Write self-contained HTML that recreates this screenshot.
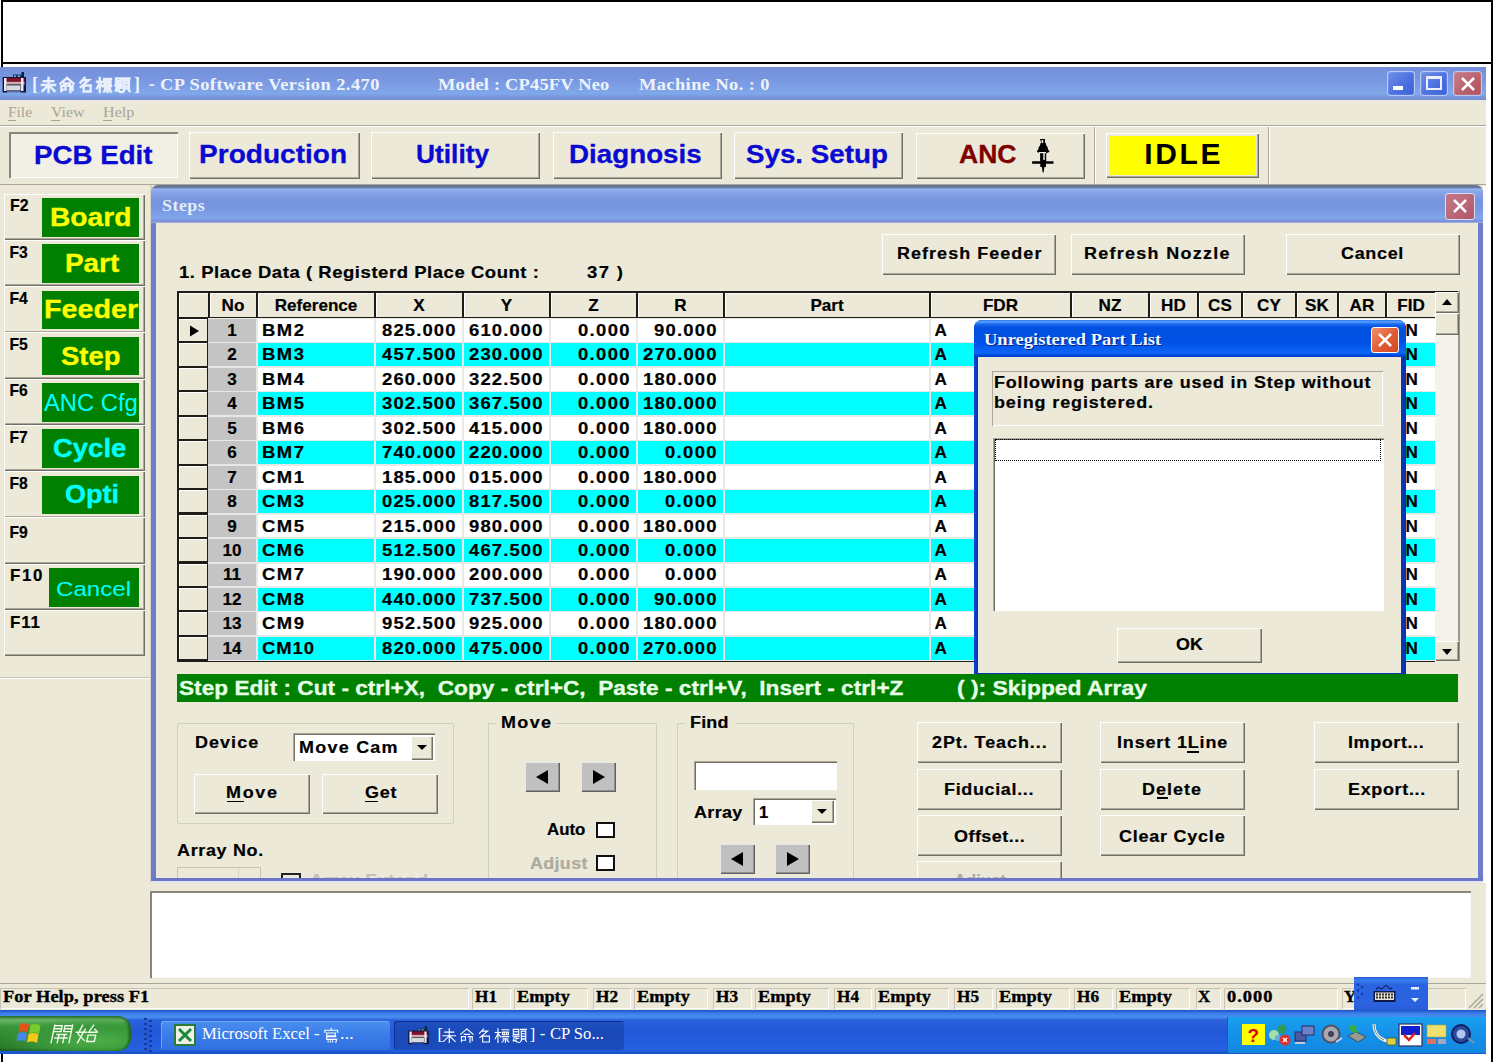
<!DOCTYPE html><html><head><meta charset="utf-8"><style>
*{margin:0;padding:0;box-sizing:border-box}
html,body{width:1493px;height:1062px;overflow:hidden;background:#fff}
body>div,.a>div{position:absolute}
body div{position:absolute;line-height:1;white-space:pre}
</style></head><body>
<div style="left:1px;top:0px;width:1492px;height:2px;background:#000"></div>
<div style="left:1px;top:0px;width:2px;height:1062px;background:#000"></div>
<div style="left:1491px;top:0px;width:2px;height:1062px;background:#000"></div>
<div style="left:1px;top:62px;width:1491px;height:2px;background:#000"></div>
<div style="left:0px;top:67px;width:1486px;height:986px;background:#ece9d8"></div>
<div style="left:0px;top:67px;width:1486px;height:33px;background:linear-gradient(#7490dc 0%,#7896e0 35%,#7d9fe6 60%,#80a8ea 80%,#7388d2 100%)"></div>
<svg style="position:absolute;left:0px;top:66px" width="32" height="32" viewBox="0 0 32 32"><rect x="13" y="8.5" width="10" height="3" fill="#183860"/><rect x="21.5" y="6" width="2.5" height="6" fill="#102040"/><rect x="14" y="9.5" width="2" height="1.5" fill="#8ab0d0"/><rect x="18" y="9.5" width="2" height="1.5" fill="#8ab0d0"/><rect x="2.6" y="11" width="23.4" height="15.5" fill="#10143a"/><rect x="4" y="12" width="20.5" height="3.8" fill="#801028"/><rect x="4" y="15.8" width="20.5" height="2.6" fill="#d8a8b0"/><rect x="4" y="18.4" width="20.5" height="1" fill="#506050"/><rect x="6.5" y="19.4" width="14" height="5" fill="#d8d8e0"/><rect x="4" y="12" width="2.5" height="13" fill="#e8e8f0"/><rect x="21" y="12" width="2.5" height="13" fill="#e8e8f0"/><rect x="7" y="25.3" width="13.5" height="1.5" fill="#7898d8"/></svg>
<div style="left:32.0px;top:74.7px;font-family:'Liberation Serif', serif;font-size:18px;font-weight:bold;color:#eef2fb;">[</div>
<svg style="position:absolute;left:40.5px;top:76.5px;overflow:visible" width="98" height="17"><g fill="none" stroke="#e8eefa" stroke-width="2.4" stroke-linecap="square"><path transform="translate(0.00,0) scale(0.938,0.938)" vector-effect="non-scaling-stroke" d="M3 4.5H13M1 8.5H15M8 1V16M8 8.5L1.5 15M8 8.5L14.5 15"/><path transform="translate(18.50,0) scale(0.938,0.938)" vector-effect="non-scaling-stroke" d="M8 1L1 7M8 1L15 7M5 7H11M2 9.5V15M2 9.5H6.5V13.5H2M9.5 9.5H14V14M11.5 9.5V16"/><path transform="translate(37.00,0) scale(0.938,0.938)" vector-effect="non-scaling-stroke" d="M7 1L2.5 6M5 3.5H11.5L3 10.5M6 9H13.5V15.5H6Z"/><path transform="translate(55.50,0) scale(0.938,0.938)" vector-effect="non-scaling-stroke" d="M0.5 5H6.5M3.5 1V16M3.5 6L0.5 12M3.5 6L6.5 10M8 2H15.5M8.5 4.5H15V7.5H8.5ZM10.5 4.5V7.5M13 4.5V7.5M8 9.5H15.5M9 12H14.5M11.8 12V16M10 13.5L8 15.5M13.5 13.5L15.5 15.5"/><path transform="translate(74.00,0) scale(0.938,0.938)" vector-effect="non-scaling-stroke" d="M1 1.5H7V7H1ZM1 4.2H7M0.5 9H7.5M4 9V14M4 11.5H7M2 10.5L0.8 14.5M1.5 13.5Q4 16 8 16M9 1.5H15.5M9.8 3.5H14.8V12H9.8ZM9.8 6.3H14.8M9.8 9.2H14.8M11 12L9 15M13.5 12L15.5 15"/></g></svg>
<div style="left:134.0px;top:74.7px;font-family:'Liberation Serif', serif;font-size:18px;font-weight:bold;color:#eef2fb;">]</div>
<div style="left:148.8px;top:74.7px;font-family:'Liberation Serif', serif;font-size:18px;font-weight:bold;color:#eef2fb;">-</div>
<div style="left:159.5px;top:75.5px;font-family:'Liberation Serif', serif;font-size:17px;font-weight:bold;color:#eef2fb;letter-spacing:0.45px;transform:scaleX(1.080);transform-origin:0 0;">CP Software Version 2.470</div>
<div style="left:437.7px;top:75.5px;font-family:'Liberation Serif', serif;font-size:17px;font-weight:bold;color:#eef2fb;letter-spacing:0.21px;transform:scaleX(1.080);transform-origin:0 0;">Model : CP45FV Neo</div>
<div style="left:639.3px;top:75.5px;font-family:'Liberation Serif', serif;font-size:17px;font-weight:bold;color:#eef2fb;letter-spacing:0.40px;transform:scaleX(1.080);transform-origin:0 0;">Machine No. : 0</div>
<div style="left:1387px;top:71px;width:28px;height:25px;background:linear-gradient(135deg,#6f8fe8,#4a6fe0 60%,#3e63d8);border:1px solid #b8c8f4;border-radius:3px;box-shadow:inset 0 0 1px #fff"></div>
<div style="left:1393px;top:86px;width:10px;height:4px;background:#fff"></div>
<div style="left:1420px;top:71px;width:28px;height:25px;background:linear-gradient(135deg,#6f8fe8,#4a6fe0 60%,#3e63d8);border:1px solid #b8c8f4;border-radius:3px;box-shadow:inset 0 0 1px #fff"></div>
<div style="left:1426px;top:76px;width:16px;height:14px;border:2px solid #eef;border-top-width:3px"></div>
<div style="left:1453px;top:71px;width:29px;height:25px;background:linear-gradient(135deg,#c87e8e,#b8606a 60%,#b05060);border:1px solid #b8c8f4;border-radius:3px;box-shadow:inset 0 0 1px #fff"></div>
<svg style="position:absolute;left:1458px;top:75px" width="20" height="18"><path d="M4 3L16 15M16 3L4 15" stroke="#fff" stroke-width="2.5"/></svg>
<div style="left:8.0px;top:105.3px;font-family:'Liberation Serif', serif;font-size:15px;font-weight:normal;color:#a8a596;letter-spacing:0.00px;transform:scaleX(1.028);transform-origin:0 0;">File</div>
<div style="left:51.0px;top:105.3px;font-family:'Liberation Serif', serif;font-size:15px;font-weight:normal;color:#a8a596;letter-spacing:0.00px;transform:scaleX(1.057);transform-origin:0 0;">View</div>
<div style="left:102.6px;top:105.3px;font-family:'Liberation Serif', serif;font-size:15px;font-weight:normal;color:#a8a596;letter-spacing:0.00px;transform:scaleX(1.076);transform-origin:0 0;">Help</div>
<div style="left:8px;top:120px;width:8px;height:1px;background:#a8a596"></div>
<div style="left:51px;top:120px;width:9px;height:1px;background:#a8a596"></div>
<div style="left:103px;top:120px;width:9px;height:1px;background:#a8a596"></div>
<div style="left:0px;top:125px;width:1486px;height:1px;background:#aca899"></div>
<div style="left:0px;top:126px;width:1486px;height:1px;background:#fff"></div>
<div style="left:9px;top:132px;width:169px;height:46px;background:#f2f0e6;box-shadow:inset 2px 2px #8a877a, inset -1px -1px #fff"></div>
<div style="left:34.2px;top:143.1px;font-family:'Liberation Sans', sans-serif;font-size:25.5px;font-weight:bold;color:#0a0ad0;transform:scaleX(1.086);transform-origin:0 0;-webkit-text-stroke:0.3px #0a0ad0;">PCB Edit</div>
<div style="left:189px;top:132px;width:171px;height:47px;background:#ece9d8;box-shadow:inset 1px 1px #fff, inset -1px -1px #716f64, inset -2px -2px #aca899;"></div>
<div style="left:199.0px;top:142.3px;font-family:'Liberation Sans', sans-serif;font-size:25.5px;font-weight:bold;color:#0a0ad0;transform:scaleX(1.100);transform-origin:0 0;-webkit-text-stroke:0.3px #0a0ad0;">Production</div>
<div style="left:371px;top:132px;width:169px;height:47px;background:#ece9d8;box-shadow:inset 1px 1px #fff, inset -1px -1px #716f64, inset -2px -2px #aca899;"></div>
<div style="left:416.3px;top:142.3px;font-family:'Liberation Sans', sans-serif;font-size:25.5px;font-weight:bold;color:#0a0ad0;transform:scaleX(1.032);transform-origin:0 0;-webkit-text-stroke:0.3px #0a0ad0;">Utility</div>
<div style="left:553px;top:132px;width:169px;height:47px;background:#ece9d8;box-shadow:inset 1px 1px #fff, inset -1px -1px #716f64, inset -2px -2px #aca899;"></div>
<div style="left:569.3px;top:142.3px;font-family:'Liberation Sans', sans-serif;font-size:25.5px;font-weight:bold;color:#0a0ad0;transform:scaleX(1.089);transform-origin:0 0;-webkit-text-stroke:0.3px #0a0ad0;">Diagnosis</div>
<div style="left:734px;top:132px;width:169px;height:47px;background:#ece9d8;box-shadow:inset 1px 1px #fff, inset -1px -1px #716f64, inset -2px -2px #aca899;"></div>
<div style="left:746.3px;top:142.3px;font-family:'Liberation Sans', sans-serif;font-size:25.5px;font-weight:bold;color:#0a0ad0;transform:scaleX(1.088);transform-origin:0 0;-webkit-text-stroke:0.3px #0a0ad0;">Sys. Setup</div>
<div style="left:916px;top:133px;width:169px;height:46px;background:#ece9d8;box-shadow:inset 1px 1px #fff, inset -1px -1px #716f64, inset -2px -2px #aca899;"></div>
<div style="left:959.0px;top:142.3px;font-family:'Liberation Sans', sans-serif;font-size:25.5px;font-weight:bold;color:#800000;transform:scaleX(1.041);transform-origin:0 0;-webkit-text-stroke:0.3px #800000;">ANC</div>
<svg style="position:absolute;left:1020px;top:132px" width="45" height="45" viewBox="0 0 45 45"><path d="M20 7h5v4h0.8l0.6 3 1 0.5 0.8 3.5 1 0.6v1.5l-3 1.2v8h7.3v2.4h-7.6v3.2h-1.6l-0.6 5.5h-1l-0.8-5.5h-1.6v-3.2h-8.2v-2.4h8v-8l-3-1.2v-1.5l1-0.6 0.8-3.5 1-0.5 0.6-3h0.8z" fill="#000"/><rect x="21.6" y="8" width="1.6" height="3" fill="#f0f0f0"/><rect x="23.2" y="20.5" width="1.6" height="7.5" fill="#d8d8d8"/><rect x="19" y="20" width="7" height="1.2" fill="#f0f0f0"/></svg>
<div style="left:1094px;top:127px;width:1px;height:57px;background:#aca899"></div>
<div style="left:1095px;top:127px;width:1px;height:57px;background:#fff"></div>
<div style="left:1105.5px;top:132.5px;width:153.5px;height:45.5px;background:#ece9d8;box-shadow:inset 1px 1px #fff, inset -1px -1px #716f64, inset -2px -2px #aca899;"></div>
<div style="left:1108.5px;top:135.5px;width:147.5px;height:39.5px;background:#ffff00"></div>
<div style="left:1144.3px;top:139.1px;font-family:'Liberation Sans', sans-serif;font-size:30px;font-weight:bold;color:#000;-webkit-text-stroke:0.3px #000;-webkit-text-stroke:0;letter-spacing:2.6px">IDLE</div>
<div style="left:1268px;top:127px;width:1px;height:57px;background:#aca899"></div>
<div style="left:1269px;top:127px;width:1px;height:57px;background:#fff"></div>
<div style="left:0px;top:184px;width:1486px;height:1px;background:#aca899"></div>
<div style="left:4px;top:193.6px;width:141px;height:46.6px;background:#ece9d8;box-shadow:inset 1px 1px #fff, inset -1px -1px #716f64, inset -2px -2px #aca899;"></div>
<div style="left:9.5px;top:198.3px;font-family:'Liberation Sans', sans-serif;font-size:15.67px;font-weight:bold;color:#000;letter-spacing:0.00px;transform:scaleX(1.012);transform-origin:0 0;-webkit-text-stroke:0.2px #000;">F2</div>
<div style="left:42px;top:198.1px;width:97px;height:38.5px;background:#008000"></div>
<div style="left:49.7px;top:204.8px;font-family:'Liberation Sans', sans-serif;font-size:25px;font-weight:bold;color:#ffff00;transform:scaleX(1.126);transform-origin:0 0;-webkit-text-stroke:0.3px #ffff00;">Board</div>
<div style="left:4px;top:239.8px;width:141px;height:46.6px;background:#ece9d8;box-shadow:inset 1px 1px #fff, inset -1px -1px #716f64, inset -2px -2px #aca899;"></div>
<div style="left:9.5px;top:244.5px;font-family:'Liberation Sans', sans-serif;font-size:15.67px;font-weight:bold;color:#000;-webkit-text-stroke:0.2px #000;">F3</div>
<div style="left:42px;top:244.3px;width:97px;height:38.5px;background:#008000"></div>
<div style="left:64.8px;top:251.1px;font-family:'Liberation Sans', sans-serif;font-size:25px;font-weight:bold;color:#ffff00;transform:scaleX(1.114);transform-origin:0 0;-webkit-text-stroke:0.3px #ffff00;">Part</div>
<div style="left:4px;top:286.1px;width:141px;height:46.6px;background:#ece9d8;box-shadow:inset 1px 1px #fff, inset -1px -1px #716f64, inset -2px -2px #aca899;"></div>
<div style="left:9.5px;top:290.8px;font-family:'Liberation Sans', sans-serif;font-size:15.67px;font-weight:bold;color:#000;-webkit-text-stroke:0.2px #000;">F4</div>
<div style="left:42px;top:290.6px;width:97px;height:38.5px;background:#008000"></div>
<div style="left:43.7px;top:297.4px;font-family:'Liberation Sans', sans-serif;font-size:25px;font-weight:bold;color:#ffff00;transform:scaleX(1.148);transform-origin:0 0;-webkit-text-stroke:0.3px #ffff00;">Feeder</div>
<div style="left:4px;top:332.4px;width:141px;height:46.6px;background:#ece9d8;box-shadow:inset 1px 1px #fff, inset -1px -1px #716f64, inset -2px -2px #aca899;"></div>
<div style="left:9.5px;top:337.0px;font-family:'Liberation Sans', sans-serif;font-size:15.67px;font-weight:bold;color:#000;-webkit-text-stroke:0.2px #000;">F5</div>
<div style="left:42px;top:336.9px;width:97px;height:38.5px;background:#008000"></div>
<div style="left:61.4px;top:343.6px;font-family:'Liberation Sans', sans-serif;font-size:25px;font-weight:bold;color:#ffff00;transform:scaleX(1.096);transform-origin:0 0;-webkit-text-stroke:0.3px #ffff00;">Step</div>
<div style="left:4px;top:378.6px;width:141px;height:46.6px;background:#ece9d8;box-shadow:inset 1px 1px #fff, inset -1px -1px #716f64, inset -2px -2px #aca899;"></div>
<div style="left:9.5px;top:383.3px;font-family:'Liberation Sans', sans-serif;font-size:15.67px;font-weight:bold;color:#000;-webkit-text-stroke:0.2px #000;">F6</div>
<div style="left:42px;top:383.1px;width:97px;height:38.5px;background:#008000"></div>
<div style="left:44.0px;top:391.6px;font-family:'Liberation Sans', sans-serif;font-size:23px;font-weight:normal;color:#00ffff;transform:scaleX(1.034);transform-origin:0 0;">ANC Cfg</div>
<div style="left:4px;top:424.9px;width:141px;height:46.6px;background:#ece9d8;box-shadow:inset 1px 1px #fff, inset -1px -1px #716f64, inset -2px -2px #aca899;"></div>
<div style="left:9.5px;top:429.5px;font-family:'Liberation Sans', sans-serif;font-size:15.67px;font-weight:bold;color:#000;-webkit-text-stroke:0.2px #000;">F7</div>
<div style="left:42px;top:429.4px;width:97px;height:38.5px;background:#008000"></div>
<div style="left:52.7px;top:436.1px;font-family:'Liberation Sans', sans-serif;font-size:25px;font-weight:bold;color:#00ffff;transform:scaleX(1.099);transform-origin:0 0;-webkit-text-stroke:0.3px #00ffff;">Cycle</div>
<div style="left:4px;top:471.1px;width:141px;height:46.6px;background:#ece9d8;box-shadow:inset 1px 1px #fff, inset -1px -1px #716f64, inset -2px -2px #aca899;"></div>
<div style="left:9.5px;top:475.8px;font-family:'Liberation Sans', sans-serif;font-size:15.67px;font-weight:bold;color:#000;-webkit-text-stroke:0.2px #000;">F8</div>
<div style="left:42px;top:475.6px;width:97px;height:38.5px;background:#008000"></div>
<div style="left:64.6px;top:482.4px;font-family:'Liberation Sans', sans-serif;font-size:25px;font-weight:bold;color:#00ffff;transform:scaleX(1.080);transform-origin:0 0;-webkit-text-stroke:0.3px #00ffff;">Opti</div>
<div style="left:4px;top:517.4px;width:141px;height:46.6px;background:#ece9d8;box-shadow:inset 1px 1px #fff, inset -1px -1px #716f64, inset -2px -2px #aca899;"></div>
<div style="left:9.5px;top:525.0px;font-family:'Liberation Sans', sans-serif;font-size:15.67px;font-weight:bold;color:#000;-webkit-text-stroke:0.2px #000;">F9</div>
<div style="left:4px;top:563.6px;width:141px;height:46.6px;background:#ece9d8;box-shadow:inset 1px 1px #fff, inset -1px -1px #716f64, inset -2px -2px #aca899;"></div>
<div style="left:9.5px;top:568.3px;font-family:'Liberation Sans', sans-serif;font-size:15.67px;font-weight:bold;color:#000;letter-spacing:1.55px;transform:scaleX(1.080);transform-origin:0 0;-webkit-text-stroke:0.2px #000;">F10</div>
<div style="left:49px;top:568.1px;width:90px;height:38.5px;background:#008000"></div>
<div style="left:55.9px;top:578.7px;font-family:'Liberation Sans', sans-serif;font-size:20.5px;font-weight:normal;color:#00ffff;transform:scaleX(1.177);transform-origin:0 0;">Cancel</div>
<div style="left:4px;top:609.9px;width:141px;height:46.6px;background:#ece9d8;box-shadow:inset 1px 1px #fff, inset -1px -1px #716f64, inset -2px -2px #aca899;"></div>
<div style="left:9.5px;top:614.5px;font-family:'Liberation Sans', sans-serif;font-size:15.67px;font-weight:bold;color:#000;letter-spacing:0.83px;transform:scaleX(1.080);transform-origin:0 0;-webkit-text-stroke:0.2px #000;">F11</div>
<div style="left:150px;top:185px;width:2px;height:868px;background:#d8d4c4"></div>
<div style="left:0px;top:677px;width:150px;height:1px;background:#c8c4b4"></div>
<div style="left:0px;top:678px;width:150px;height:1px;background:#fff"></div>
<div style="left:151px;top:186px;width:1332px;height:697px;background:#6e7cca;border-radius:7px 7px 0 0"></div>
<div style="left:1483px;top:186px;width:3px;height:697px;background:#fafafa"></div>
<div style="left:151px;top:184.5px;width:1332px;height:38.5px;background:linear-gradient(#647494 0px,#6a7a9c 2.5px,#94b2f2 4px,#86a2e8 8px,#7794de 16px,#7898e2 24px,#80a6ea 33px,#7c90dc 36px,#8090d8 37px,#dce4e4 38.5px);border-radius:7px 7px 0 0"></div>
<div style="left:156px;top:223px;width:1322px;height:655px;background:#ece9d8"></div>
<div style="left:161.9px;top:198.2px;font-family:'Liberation Serif', serif;font-size:16.5px;font-weight:bold;color:#e4ecfb;letter-spacing:0.49px;transform:scaleX(1.080);transform-origin:0 0;">Steps</div>
<div style="left:1445px;top:193px;width:30px;height:27px;background:linear-gradient(135deg,#c47888,#b05868);border:1px solid #d8def4;border-radius:3px"></div>
<svg style="position:absolute;left:1450px;top:196px" width="20" height="20"><path d="M4 4L16 16M16 4L4 16" stroke="#fff" stroke-width="2.5"/></svg>
<div style="left:178.5px;top:264.3px;font-family:'Liberation Sans', sans-serif;font-size:17.1px;font-weight:bold;color:#000;letter-spacing:0.52px;transform:scaleX(1.080);transform-origin:0 0;-webkit-text-stroke:0.2px #000;">1. Place Data ( Registerd Place Count :</div>
<div style="left:587.0px;top:264.3px;font-family:'Liberation Sans', sans-serif;font-size:17.1px;font-weight:bold;color:#000;letter-spacing:1.29px;transform:scaleX(1.080);transform-origin:0 0;-webkit-text-stroke:0.2px #000;">37 )</div>
<div style="left:882px;top:234px;width:174px;height:41px;background:#ece9d8;box-shadow:inset 1px 1px #fff, inset -1px -1px #716f64, inset -2px -2px #aca899;"></div>
<div style="left:897.3px;top:245.5px;font-family:'Liberation Sans', sans-serif;font-size:16.62px;font-weight:bold;color:#000;letter-spacing:0.98px;transform:scaleX(1.080);transform-origin:0 0;-webkit-text-stroke:0.2px #000;">Refresh Feeder</div>
<div style="left:1071px;top:234px;width:174px;height:41px;background:#ece9d8;box-shadow:inset 1px 1px #fff, inset -1px -1px #716f64, inset -2px -2px #aca899;"></div>
<div style="left:1084.1px;top:245.5px;font-family:'Liberation Sans', sans-serif;font-size:16.62px;font-weight:bold;color:#000;letter-spacing:1.20px;transform:scaleX(1.080);transform-origin:0 0;-webkit-text-stroke:0.2px #000;">Refresh Nozzle</div>
<div style="left:1286px;top:234px;width:174px;height:41px;background:#ece9d8;box-shadow:inset 1px 1px #fff, inset -1px -1px #716f64, inset -2px -2px #aca899;"></div>
<div style="left:1341.4px;top:245.5px;font-family:'Liberation Sans', sans-serif;font-size:16.62px;font-weight:bold;color:#000;letter-spacing:0.64px;transform:scaleX(1.080);transform-origin:0 0;-webkit-text-stroke:0.2px #000;">Cancel</div>
<div style="left:177px;top:291px;width:1258px;height:370.8px;background:#201c18"></div>
<div style="left:178.5px;top:292.5px;width:29px;height:24.5px;background:#ece9d8;box-shadow:inset 1px 1px #fff"></div>
<div style="left:209.5px;top:292.5px;width:46px;height:24.5px;background:#ece9d8;box-shadow:inset 1px 1px #fff"></div>
<div style="left:221.6px;top:296.8px;font-family:'Liberation Sans', sans-serif;font-size:17.1px;font-weight:bold;color:#000;-webkit-text-stroke:0.2px #000;">No</div>
<div style="left:257.5px;top:292.5px;width:116px;height:24.5px;background:#ece9d8;box-shadow:inset 1px 1px #fff"></div>
<div style="left:274.7px;top:296.8px;font-family:'Liberation Sans', sans-serif;font-size:17.1px;font-weight:bold;color:#000;-webkit-text-stroke:0.2px #000;">Reference</div>
<div style="left:375.5px;top:292.5px;width:86px;height:24.5px;background:#ece9d8;box-shadow:inset 1px 1px #fff"></div>
<div style="left:413.3px;top:296.8px;font-family:'Liberation Sans', sans-serif;font-size:17.1px;font-weight:bold;color:#000;-webkit-text-stroke:0.2px #000;">X</div>
<div style="left:463.5px;top:292.5px;width:85px;height:24.5px;background:#ece9d8;box-shadow:inset 1px 1px #fff"></div>
<div style="left:500.8px;top:296.8px;font-family:'Liberation Sans', sans-serif;font-size:17.1px;font-weight:bold;color:#000;-webkit-text-stroke:0.2px #000;">Y</div>
<div style="left:550.5px;top:292.5px;width:85px;height:24.5px;background:#ece9d8;box-shadow:inset 1px 1px #fff"></div>
<div style="left:588.3px;top:296.8px;font-family:'Liberation Sans', sans-serif;font-size:17.1px;font-weight:bold;color:#000;-webkit-text-stroke:0.2px #000;">Z</div>
<div style="left:637.5px;top:292.5px;width:85px;height:24.5px;background:#ece9d8;box-shadow:inset 1px 1px #fff"></div>
<div style="left:674.3px;top:296.8px;font-family:'Liberation Sans', sans-serif;font-size:17.1px;font-weight:bold;color:#000;-webkit-text-stroke:0.2px #000;">R</div>
<div style="left:724.5px;top:292.5px;width:204px;height:24.5px;background:#ece9d8;box-shadow:inset 1px 1px #fff"></div>
<div style="left:810.4px;top:296.8px;font-family:'Liberation Sans', sans-serif;font-size:17.1px;font-weight:bold;color:#000;-webkit-text-stroke:0.2px #000;">Part</div>
<div style="left:930.5px;top:292.5px;width:139px;height:24.5px;background:#ece9d8;box-shadow:inset 1px 1px #fff"></div>
<div style="left:982.9px;top:296.8px;font-family:'Liberation Sans', sans-serif;font-size:17.1px;font-weight:bold;color:#000;-webkit-text-stroke:0.2px #000;">FDR</div>
<div style="left:1071.5px;top:292.5px;width:76px;height:24.5px;background:#ece9d8;box-shadow:inset 1px 1px #fff"></div>
<div style="left:1098.6px;top:296.8px;font-family:'Liberation Sans', sans-serif;font-size:17.1px;font-weight:bold;color:#000;-webkit-text-stroke:0.2px #000;">NZ</div>
<div style="left:1149.5px;top:292.5px;width:47px;height:24.5px;background:#ece9d8;box-shadow:inset 1px 1px #fff"></div>
<div style="left:1161.1px;top:296.8px;font-family:'Liberation Sans', sans-serif;font-size:17.1px;font-weight:bold;color:#000;-webkit-text-stroke:0.2px #000;">HD</div>
<div style="left:1198.5px;top:292.5px;width:42px;height:24.5px;background:#ece9d8;box-shadow:inset 1px 1px #fff"></div>
<div style="left:1208.1px;top:296.8px;font-family:'Liberation Sans', sans-serif;font-size:17.1px;font-weight:bold;color:#000;-webkit-text-stroke:0.2px #000;">CS</div>
<div style="left:1242.5px;top:292.5px;width:52px;height:24.5px;background:#ece9d8;box-shadow:inset 1px 1px #fff"></div>
<div style="left:1257.1px;top:296.8px;font-family:'Liberation Sans', sans-serif;font-size:17.1px;font-weight:bold;color:#000;-webkit-text-stroke:0.2px #000;">CY</div>
<div style="left:1296.5px;top:292.5px;width:40px;height:24.5px;background:#ece9d8;box-shadow:inset 1px 1px #fff"></div>
<div style="left:1305.1px;top:296.8px;font-family:'Liberation Sans', sans-serif;font-size:17.1px;font-weight:bold;color:#000;-webkit-text-stroke:0.2px #000;">SK</div>
<div style="left:1338.5px;top:292.5px;width:46px;height:24.5px;background:#ece9d8;box-shadow:inset 1px 1px #fff"></div>
<div style="left:1349.6px;top:296.8px;font-family:'Liberation Sans', sans-serif;font-size:17.1px;font-weight:bold;color:#000;-webkit-text-stroke:0.2px #000;">AR</div>
<div style="left:1386.5px;top:292.5px;width:48px;height:24.5px;background:#ece9d8;box-shadow:inset 1px 1px #fff"></div>
<div style="left:1397.2px;top:296.8px;font-family:'Liberation Sans', sans-serif;font-size:17.1px;font-weight:bold;color:#000;-webkit-text-stroke:0.2px #000;">FID</div>
<div style="left:178.5px;top:319.0px;width:28.5px;height:22.4px;background:#ece9d8;box-shadow:inset 1px 1px #fff"></div>
<div style="left:208px;top:318.0px;width:1227px;height:24.9px;background:#e8e8e4"></div>
<div style="left:208px;top:319.0px;width:48px;height:22.9px;background:#c4c4c4"></div>
<div style="left:257.5px;top:319.0px;width:116px;height:22.9px;background:#ffffff"></div>
<div style="left:375.5px;top:319.0px;width:86px;height:22.9px;background:#ffffff"></div>
<div style="left:463.5px;top:319.0px;width:85px;height:22.9px;background:#ffffff"></div>
<div style="left:550.5px;top:319.0px;width:85px;height:22.9px;background:#ffffff"></div>
<div style="left:637.5px;top:319.0px;width:85px;height:22.9px;background:#ffffff"></div>
<div style="left:724.5px;top:319.0px;width:204px;height:22.9px;background:#ffffff"></div>
<div style="left:930.5px;top:319.0px;width:139px;height:22.9px;background:#ffffff"></div>
<div style="left:1071.5px;top:319.0px;width:76px;height:22.9px;background:#ffffff"></div>
<div style="left:1149.5px;top:319.0px;width:47px;height:22.9px;background:#ffffff"></div>
<div style="left:1198.5px;top:319.0px;width:42px;height:22.9px;background:#ffffff"></div>
<div style="left:1242.5px;top:319.0px;width:52px;height:22.9px;background:#ffffff"></div>
<div style="left:1296.5px;top:319.0px;width:40px;height:22.9px;background:#ffffff"></div>
<div style="left:1338.5px;top:319.0px;width:46px;height:22.9px;background:#ffffff"></div>
<div style="left:1386.5px;top:319.0px;width:48px;height:22.9px;background:#ffffff"></div>
<div style="left:227.2px;top:321.9px;font-family:'Liberation Sans', sans-serif;font-size:17.1px;font-weight:bold;color:#000;-webkit-text-stroke:0.2px #000;">1</div>
<div style="left:261.5px;top:321.9px;font-family:'Liberation Sans', sans-serif;font-size:17.1px;font-weight:bold;color:#000;letter-spacing:1.35px;transform:scaleX(1.080);transform-origin:0 0;-webkit-text-stroke:0.2px #000;">BM2</div>
<div style="left:382.3px;top:321.9px;font-family:'Liberation Sans', sans-serif;font-size:17.1px;font-weight:bold;color:#000;letter-spacing:1.04px;transform:scaleX(1.080);transform-origin:0 0;-webkit-text-stroke:0.2px #000;">825.000</div>
<div style="left:468.5px;top:321.9px;font-family:'Liberation Sans', sans-serif;font-size:17.1px;font-weight:bold;color:#000;letter-spacing:1.04px;transform:scaleX(1.080);transform-origin:0 0;-webkit-text-stroke:0.2px #000;">610.000</div>
<div style="left:578.2px;top:321.9px;font-family:'Liberation Sans', sans-serif;font-size:17.1px;font-weight:bold;color:#000;letter-spacing:1.23px;transform:scaleX(1.080);transform-origin:0 0;-webkit-text-stroke:0.2px #000;">0.000</div>
<div style="left:654.2px;top:321.9px;font-family:'Liberation Sans', sans-serif;font-size:17.1px;font-weight:bold;color:#000;letter-spacing:1.11px;transform:scaleX(1.080);transform-origin:0 0;-webkit-text-stroke:0.2px #000;">90.000</div>
<div style="left:934.5px;top:321.9px;font-family:'Liberation Sans', sans-serif;font-size:17.1px;font-weight:bold;color:#000;-webkit-text-stroke:0.2px #000;">A</div>
<div style="left:1405.5px;top:321.9px;font-family:'Liberation Sans', sans-serif;font-size:17.1px;font-weight:bold;color:#000;-webkit-text-stroke:0.2px #000;">N</div>
<div style="left:178.5px;top:343.4px;width:28.5px;height:22.4px;background:#ece9d8;box-shadow:inset 1px 1px #fff"></div>
<div style="left:208px;top:342.4px;width:1227px;height:24.9px;background:#e8e8e4"></div>
<div style="left:208px;top:343.4px;width:48px;height:22.9px;background:#c4c4c4"></div>
<div style="left:257.5px;top:343.4px;width:116px;height:22.9px;background:#00ffff"></div>
<div style="left:375.5px;top:343.4px;width:86px;height:22.9px;background:#00ffff"></div>
<div style="left:463.5px;top:343.4px;width:85px;height:22.9px;background:#00ffff"></div>
<div style="left:550.5px;top:343.4px;width:85px;height:22.9px;background:#00ffff"></div>
<div style="left:637.5px;top:343.4px;width:85px;height:22.9px;background:#00ffff"></div>
<div style="left:724.5px;top:343.4px;width:204px;height:22.9px;background:#00ffff"></div>
<div style="left:930.5px;top:343.4px;width:139px;height:22.9px;background:#00ffff"></div>
<div style="left:1071.5px;top:343.4px;width:76px;height:22.9px;background:#00ffff"></div>
<div style="left:1149.5px;top:343.4px;width:47px;height:22.9px;background:#00ffff"></div>
<div style="left:1198.5px;top:343.4px;width:42px;height:22.9px;background:#00ffff"></div>
<div style="left:1242.5px;top:343.4px;width:52px;height:22.9px;background:#00ffff"></div>
<div style="left:1296.5px;top:343.4px;width:40px;height:22.9px;background:#00ffff"></div>
<div style="left:1338.5px;top:343.4px;width:46px;height:22.9px;background:#00ffff"></div>
<div style="left:1386.5px;top:343.4px;width:48px;height:22.9px;background:#00ffff"></div>
<div style="left:227.2px;top:346.3px;font-family:'Liberation Sans', sans-serif;font-size:17.1px;font-weight:bold;color:#000;-webkit-text-stroke:0.2px #000;">2</div>
<div style="left:261.5px;top:346.3px;font-family:'Liberation Sans', sans-serif;font-size:17.1px;font-weight:bold;color:#000;letter-spacing:1.35px;transform:scaleX(1.080);transform-origin:0 0;-webkit-text-stroke:0.2px #000;">BM3</div>
<div style="left:382.3px;top:346.3px;font-family:'Liberation Sans', sans-serif;font-size:17.1px;font-weight:bold;color:#000;letter-spacing:1.04px;transform:scaleX(1.080);transform-origin:0 0;-webkit-text-stroke:0.2px #000;">457.500</div>
<div style="left:468.5px;top:346.3px;font-family:'Liberation Sans', sans-serif;font-size:17.1px;font-weight:bold;color:#000;letter-spacing:1.04px;transform:scaleX(1.080);transform-origin:0 0;-webkit-text-stroke:0.2px #000;">230.000</div>
<div style="left:578.2px;top:346.3px;font-family:'Liberation Sans', sans-serif;font-size:17.1px;font-weight:bold;color:#000;letter-spacing:1.23px;transform:scaleX(1.080);transform-origin:0 0;-webkit-text-stroke:0.2px #000;">0.000</div>
<div style="left:643.2px;top:346.3px;font-family:'Liberation Sans', sans-serif;font-size:17.1px;font-weight:bold;color:#000;letter-spacing:1.04px;transform:scaleX(1.080);transform-origin:0 0;-webkit-text-stroke:0.2px #000;">270.000</div>
<div style="left:934.5px;top:346.3px;font-family:'Liberation Sans', sans-serif;font-size:17.1px;font-weight:bold;color:#000;-webkit-text-stroke:0.2px #000;">A</div>
<div style="left:1405.5px;top:346.3px;font-family:'Liberation Sans', sans-serif;font-size:17.1px;font-weight:bold;color:#000;-webkit-text-stroke:0.2px #000;">N</div>
<div style="left:178.5px;top:367.9px;width:28.5px;height:22.4px;background:#ece9d8;box-shadow:inset 1px 1px #fff"></div>
<div style="left:208px;top:366.9px;width:1227px;height:24.9px;background:#e8e8e4"></div>
<div style="left:208px;top:367.9px;width:48px;height:22.9px;background:#c4c4c4"></div>
<div style="left:257.5px;top:367.9px;width:116px;height:22.9px;background:#ffffff"></div>
<div style="left:375.5px;top:367.9px;width:86px;height:22.9px;background:#ffffff"></div>
<div style="left:463.5px;top:367.9px;width:85px;height:22.9px;background:#ffffff"></div>
<div style="left:550.5px;top:367.9px;width:85px;height:22.9px;background:#ffffff"></div>
<div style="left:637.5px;top:367.9px;width:85px;height:22.9px;background:#ffffff"></div>
<div style="left:724.5px;top:367.9px;width:204px;height:22.9px;background:#ffffff"></div>
<div style="left:930.5px;top:367.9px;width:139px;height:22.9px;background:#ffffff"></div>
<div style="left:1071.5px;top:367.9px;width:76px;height:22.9px;background:#ffffff"></div>
<div style="left:1149.5px;top:367.9px;width:47px;height:22.9px;background:#ffffff"></div>
<div style="left:1198.5px;top:367.9px;width:42px;height:22.9px;background:#ffffff"></div>
<div style="left:1242.5px;top:367.9px;width:52px;height:22.9px;background:#ffffff"></div>
<div style="left:1296.5px;top:367.9px;width:40px;height:22.9px;background:#ffffff"></div>
<div style="left:1338.5px;top:367.9px;width:46px;height:22.9px;background:#ffffff"></div>
<div style="left:1386.5px;top:367.9px;width:48px;height:22.9px;background:#ffffff"></div>
<div style="left:227.2px;top:370.8px;font-family:'Liberation Sans', sans-serif;font-size:17.1px;font-weight:bold;color:#000;-webkit-text-stroke:0.2px #000;">3</div>
<div style="left:261.5px;top:370.8px;font-family:'Liberation Sans', sans-serif;font-size:17.1px;font-weight:bold;color:#000;letter-spacing:1.35px;transform:scaleX(1.080);transform-origin:0 0;-webkit-text-stroke:0.2px #000;">BM4</div>
<div style="left:382.3px;top:370.8px;font-family:'Liberation Sans', sans-serif;font-size:17.1px;font-weight:bold;color:#000;letter-spacing:1.04px;transform:scaleX(1.080);transform-origin:0 0;-webkit-text-stroke:0.2px #000;">260.000</div>
<div style="left:468.5px;top:370.8px;font-family:'Liberation Sans', sans-serif;font-size:17.1px;font-weight:bold;color:#000;letter-spacing:1.04px;transform:scaleX(1.080);transform-origin:0 0;-webkit-text-stroke:0.2px #000;">322.500</div>
<div style="left:578.2px;top:370.8px;font-family:'Liberation Sans', sans-serif;font-size:17.1px;font-weight:bold;color:#000;letter-spacing:1.23px;transform:scaleX(1.080);transform-origin:0 0;-webkit-text-stroke:0.2px #000;">0.000</div>
<div style="left:643.2px;top:370.8px;font-family:'Liberation Sans', sans-serif;font-size:17.1px;font-weight:bold;color:#000;letter-spacing:1.04px;transform:scaleX(1.080);transform-origin:0 0;-webkit-text-stroke:0.2px #000;">180.000</div>
<div style="left:934.5px;top:370.8px;font-family:'Liberation Sans', sans-serif;font-size:17.1px;font-weight:bold;color:#000;-webkit-text-stroke:0.2px #000;">A</div>
<div style="left:1405.5px;top:370.8px;font-family:'Liberation Sans', sans-serif;font-size:17.1px;font-weight:bold;color:#000;-webkit-text-stroke:0.2px #000;">N</div>
<div style="left:178.5px;top:392.4px;width:28.5px;height:22.4px;background:#ece9d8;box-shadow:inset 1px 1px #fff"></div>
<div style="left:208px;top:391.4px;width:1227px;height:24.9px;background:#e8e8e4"></div>
<div style="left:208px;top:392.4px;width:48px;height:22.9px;background:#c4c4c4"></div>
<div style="left:257.5px;top:392.4px;width:116px;height:22.9px;background:#00ffff"></div>
<div style="left:375.5px;top:392.4px;width:86px;height:22.9px;background:#00ffff"></div>
<div style="left:463.5px;top:392.4px;width:85px;height:22.9px;background:#00ffff"></div>
<div style="left:550.5px;top:392.4px;width:85px;height:22.9px;background:#00ffff"></div>
<div style="left:637.5px;top:392.4px;width:85px;height:22.9px;background:#00ffff"></div>
<div style="left:724.5px;top:392.4px;width:204px;height:22.9px;background:#00ffff"></div>
<div style="left:930.5px;top:392.4px;width:139px;height:22.9px;background:#00ffff"></div>
<div style="left:1071.5px;top:392.4px;width:76px;height:22.9px;background:#00ffff"></div>
<div style="left:1149.5px;top:392.4px;width:47px;height:22.9px;background:#00ffff"></div>
<div style="left:1198.5px;top:392.4px;width:42px;height:22.9px;background:#00ffff"></div>
<div style="left:1242.5px;top:392.4px;width:52px;height:22.9px;background:#00ffff"></div>
<div style="left:1296.5px;top:392.4px;width:40px;height:22.9px;background:#00ffff"></div>
<div style="left:1338.5px;top:392.4px;width:46px;height:22.9px;background:#00ffff"></div>
<div style="left:1386.5px;top:392.4px;width:48px;height:22.9px;background:#00ffff"></div>
<div style="left:227.2px;top:395.2px;font-family:'Liberation Sans', sans-serif;font-size:17.1px;font-weight:bold;color:#000;-webkit-text-stroke:0.2px #000;">4</div>
<div style="left:261.5px;top:395.2px;font-family:'Liberation Sans', sans-serif;font-size:17.1px;font-weight:bold;color:#000;letter-spacing:1.35px;transform:scaleX(1.080);transform-origin:0 0;-webkit-text-stroke:0.2px #000;">BM5</div>
<div style="left:382.3px;top:395.2px;font-family:'Liberation Sans', sans-serif;font-size:17.1px;font-weight:bold;color:#000;letter-spacing:1.04px;transform:scaleX(1.080);transform-origin:0 0;-webkit-text-stroke:0.2px #000;">302.500</div>
<div style="left:468.5px;top:395.2px;font-family:'Liberation Sans', sans-serif;font-size:17.1px;font-weight:bold;color:#000;letter-spacing:1.04px;transform:scaleX(1.080);transform-origin:0 0;-webkit-text-stroke:0.2px #000;">367.500</div>
<div style="left:578.2px;top:395.2px;font-family:'Liberation Sans', sans-serif;font-size:17.1px;font-weight:bold;color:#000;letter-spacing:1.23px;transform:scaleX(1.080);transform-origin:0 0;-webkit-text-stroke:0.2px #000;">0.000</div>
<div style="left:643.2px;top:395.2px;font-family:'Liberation Sans', sans-serif;font-size:17.1px;font-weight:bold;color:#000;letter-spacing:1.04px;transform:scaleX(1.080);transform-origin:0 0;-webkit-text-stroke:0.2px #000;">180.000</div>
<div style="left:934.5px;top:395.2px;font-family:'Liberation Sans', sans-serif;font-size:17.1px;font-weight:bold;color:#000;-webkit-text-stroke:0.2px #000;">A</div>
<div style="left:1405.5px;top:395.2px;font-family:'Liberation Sans', sans-serif;font-size:17.1px;font-weight:bold;color:#000;-webkit-text-stroke:0.2px #000;">N</div>
<div style="left:178.5px;top:416.8px;width:28.5px;height:22.4px;background:#ece9d8;box-shadow:inset 1px 1px #fff"></div>
<div style="left:208px;top:415.8px;width:1227px;height:24.9px;background:#e8e8e4"></div>
<div style="left:208px;top:416.8px;width:48px;height:22.9px;background:#c4c4c4"></div>
<div style="left:257.5px;top:416.8px;width:116px;height:22.9px;background:#ffffff"></div>
<div style="left:375.5px;top:416.8px;width:86px;height:22.9px;background:#ffffff"></div>
<div style="left:463.5px;top:416.8px;width:85px;height:22.9px;background:#ffffff"></div>
<div style="left:550.5px;top:416.8px;width:85px;height:22.9px;background:#ffffff"></div>
<div style="left:637.5px;top:416.8px;width:85px;height:22.9px;background:#ffffff"></div>
<div style="left:724.5px;top:416.8px;width:204px;height:22.9px;background:#ffffff"></div>
<div style="left:930.5px;top:416.8px;width:139px;height:22.9px;background:#ffffff"></div>
<div style="left:1071.5px;top:416.8px;width:76px;height:22.9px;background:#ffffff"></div>
<div style="left:1149.5px;top:416.8px;width:47px;height:22.9px;background:#ffffff"></div>
<div style="left:1198.5px;top:416.8px;width:42px;height:22.9px;background:#ffffff"></div>
<div style="left:1242.5px;top:416.8px;width:52px;height:22.9px;background:#ffffff"></div>
<div style="left:1296.5px;top:416.8px;width:40px;height:22.9px;background:#ffffff"></div>
<div style="left:1338.5px;top:416.8px;width:46px;height:22.9px;background:#ffffff"></div>
<div style="left:1386.5px;top:416.8px;width:48px;height:22.9px;background:#ffffff"></div>
<div style="left:227.2px;top:419.7px;font-family:'Liberation Sans', sans-serif;font-size:17.1px;font-weight:bold;color:#000;-webkit-text-stroke:0.2px #000;">5</div>
<div style="left:261.5px;top:419.7px;font-family:'Liberation Sans', sans-serif;font-size:17.1px;font-weight:bold;color:#000;letter-spacing:1.35px;transform:scaleX(1.080);transform-origin:0 0;-webkit-text-stroke:0.2px #000;">BM6</div>
<div style="left:382.3px;top:419.7px;font-family:'Liberation Sans', sans-serif;font-size:17.1px;font-weight:bold;color:#000;letter-spacing:1.04px;transform:scaleX(1.080);transform-origin:0 0;-webkit-text-stroke:0.2px #000;">302.500</div>
<div style="left:468.5px;top:419.7px;font-family:'Liberation Sans', sans-serif;font-size:17.1px;font-weight:bold;color:#000;letter-spacing:1.04px;transform:scaleX(1.080);transform-origin:0 0;-webkit-text-stroke:0.2px #000;">415.000</div>
<div style="left:578.2px;top:419.7px;font-family:'Liberation Sans', sans-serif;font-size:17.1px;font-weight:bold;color:#000;letter-spacing:1.23px;transform:scaleX(1.080);transform-origin:0 0;-webkit-text-stroke:0.2px #000;">0.000</div>
<div style="left:643.2px;top:419.7px;font-family:'Liberation Sans', sans-serif;font-size:17.1px;font-weight:bold;color:#000;letter-spacing:1.04px;transform:scaleX(1.080);transform-origin:0 0;-webkit-text-stroke:0.2px #000;">180.000</div>
<div style="left:934.5px;top:419.7px;font-family:'Liberation Sans', sans-serif;font-size:17.1px;font-weight:bold;color:#000;-webkit-text-stroke:0.2px #000;">A</div>
<div style="left:1405.5px;top:419.7px;font-family:'Liberation Sans', sans-serif;font-size:17.1px;font-weight:bold;color:#000;-webkit-text-stroke:0.2px #000;">N</div>
<div style="left:178.5px;top:441.2px;width:28.5px;height:22.4px;background:#ece9d8;box-shadow:inset 1px 1px #fff"></div>
<div style="left:208px;top:440.2px;width:1227px;height:24.9px;background:#e8e8e4"></div>
<div style="left:208px;top:441.2px;width:48px;height:22.9px;background:#c4c4c4"></div>
<div style="left:257.5px;top:441.2px;width:116px;height:22.9px;background:#00ffff"></div>
<div style="left:375.5px;top:441.2px;width:86px;height:22.9px;background:#00ffff"></div>
<div style="left:463.5px;top:441.2px;width:85px;height:22.9px;background:#00ffff"></div>
<div style="left:550.5px;top:441.2px;width:85px;height:22.9px;background:#00ffff"></div>
<div style="left:637.5px;top:441.2px;width:85px;height:22.9px;background:#00ffff"></div>
<div style="left:724.5px;top:441.2px;width:204px;height:22.9px;background:#00ffff"></div>
<div style="left:930.5px;top:441.2px;width:139px;height:22.9px;background:#00ffff"></div>
<div style="left:1071.5px;top:441.2px;width:76px;height:22.9px;background:#00ffff"></div>
<div style="left:1149.5px;top:441.2px;width:47px;height:22.9px;background:#00ffff"></div>
<div style="left:1198.5px;top:441.2px;width:42px;height:22.9px;background:#00ffff"></div>
<div style="left:1242.5px;top:441.2px;width:52px;height:22.9px;background:#00ffff"></div>
<div style="left:1296.5px;top:441.2px;width:40px;height:22.9px;background:#00ffff"></div>
<div style="left:1338.5px;top:441.2px;width:46px;height:22.9px;background:#00ffff"></div>
<div style="left:1386.5px;top:441.2px;width:48px;height:22.9px;background:#00ffff"></div>
<div style="left:227.2px;top:444.1px;font-family:'Liberation Sans', sans-serif;font-size:17.1px;font-weight:bold;color:#000;-webkit-text-stroke:0.2px #000;">6</div>
<div style="left:261.5px;top:444.1px;font-family:'Liberation Sans', sans-serif;font-size:17.1px;font-weight:bold;color:#000;letter-spacing:1.35px;transform:scaleX(1.080);transform-origin:0 0;-webkit-text-stroke:0.2px #000;">BM7</div>
<div style="left:382.3px;top:444.1px;font-family:'Liberation Sans', sans-serif;font-size:17.1px;font-weight:bold;color:#000;letter-spacing:1.04px;transform:scaleX(1.080);transform-origin:0 0;-webkit-text-stroke:0.2px #000;">740.000</div>
<div style="left:468.5px;top:444.1px;font-family:'Liberation Sans', sans-serif;font-size:17.1px;font-weight:bold;color:#000;letter-spacing:1.04px;transform:scaleX(1.080);transform-origin:0 0;-webkit-text-stroke:0.2px #000;">220.000</div>
<div style="left:578.2px;top:444.1px;font-family:'Liberation Sans', sans-serif;font-size:17.1px;font-weight:bold;color:#000;letter-spacing:1.23px;transform:scaleX(1.080);transform-origin:0 0;-webkit-text-stroke:0.2px #000;">0.000</div>
<div style="left:665.2px;top:444.1px;font-family:'Liberation Sans', sans-serif;font-size:17.1px;font-weight:bold;color:#000;letter-spacing:1.23px;transform:scaleX(1.080);transform-origin:0 0;-webkit-text-stroke:0.2px #000;">0.000</div>
<div style="left:934.5px;top:444.1px;font-family:'Liberation Sans', sans-serif;font-size:17.1px;font-weight:bold;color:#000;-webkit-text-stroke:0.2px #000;">A</div>
<div style="left:1405.5px;top:444.1px;font-family:'Liberation Sans', sans-serif;font-size:17.1px;font-weight:bold;color:#000;-webkit-text-stroke:0.2px #000;">N</div>
<div style="left:178.5px;top:465.7px;width:28.5px;height:22.4px;background:#ece9d8;box-shadow:inset 1px 1px #fff"></div>
<div style="left:208px;top:464.7px;width:1227px;height:24.9px;background:#e8e8e4"></div>
<div style="left:208px;top:465.7px;width:48px;height:22.9px;background:#c4c4c4"></div>
<div style="left:257.5px;top:465.7px;width:116px;height:22.9px;background:#ffffff"></div>
<div style="left:375.5px;top:465.7px;width:86px;height:22.9px;background:#ffffff"></div>
<div style="left:463.5px;top:465.7px;width:85px;height:22.9px;background:#ffffff"></div>
<div style="left:550.5px;top:465.7px;width:85px;height:22.9px;background:#ffffff"></div>
<div style="left:637.5px;top:465.7px;width:85px;height:22.9px;background:#ffffff"></div>
<div style="left:724.5px;top:465.7px;width:204px;height:22.9px;background:#ffffff"></div>
<div style="left:930.5px;top:465.7px;width:139px;height:22.9px;background:#ffffff"></div>
<div style="left:1071.5px;top:465.7px;width:76px;height:22.9px;background:#ffffff"></div>
<div style="left:1149.5px;top:465.7px;width:47px;height:22.9px;background:#ffffff"></div>
<div style="left:1198.5px;top:465.7px;width:42px;height:22.9px;background:#ffffff"></div>
<div style="left:1242.5px;top:465.7px;width:52px;height:22.9px;background:#ffffff"></div>
<div style="left:1296.5px;top:465.7px;width:40px;height:22.9px;background:#ffffff"></div>
<div style="left:1338.5px;top:465.7px;width:46px;height:22.9px;background:#ffffff"></div>
<div style="left:1386.5px;top:465.7px;width:48px;height:22.9px;background:#ffffff"></div>
<div style="left:227.2px;top:468.6px;font-family:'Liberation Sans', sans-serif;font-size:17.1px;font-weight:bold;color:#000;-webkit-text-stroke:0.2px #000;">7</div>
<div style="left:261.5px;top:468.6px;font-family:'Liberation Sans', sans-serif;font-size:17.1px;font-weight:bold;color:#000;letter-spacing:1.35px;transform:scaleX(1.080);transform-origin:0 0;-webkit-text-stroke:0.2px #000;">CM1</div>
<div style="left:382.3px;top:468.6px;font-family:'Liberation Sans', sans-serif;font-size:17.1px;font-weight:bold;color:#000;letter-spacing:1.04px;transform:scaleX(1.080);transform-origin:0 0;-webkit-text-stroke:0.2px #000;">185.000</div>
<div style="left:468.5px;top:468.6px;font-family:'Liberation Sans', sans-serif;font-size:17.1px;font-weight:bold;color:#000;letter-spacing:1.04px;transform:scaleX(1.080);transform-origin:0 0;-webkit-text-stroke:0.2px #000;">015.000</div>
<div style="left:578.2px;top:468.6px;font-family:'Liberation Sans', sans-serif;font-size:17.1px;font-weight:bold;color:#000;letter-spacing:1.23px;transform:scaleX(1.080);transform-origin:0 0;-webkit-text-stroke:0.2px #000;">0.000</div>
<div style="left:643.2px;top:468.6px;font-family:'Liberation Sans', sans-serif;font-size:17.1px;font-weight:bold;color:#000;letter-spacing:1.04px;transform:scaleX(1.080);transform-origin:0 0;-webkit-text-stroke:0.2px #000;">180.000</div>
<div style="left:934.5px;top:468.6px;font-family:'Liberation Sans', sans-serif;font-size:17.1px;font-weight:bold;color:#000;-webkit-text-stroke:0.2px #000;">A</div>
<div style="left:1405.5px;top:468.6px;font-family:'Liberation Sans', sans-serif;font-size:17.1px;font-weight:bold;color:#000;-webkit-text-stroke:0.2px #000;">N</div>
<div style="left:178.5px;top:490.1px;width:28.5px;height:22.4px;background:#ece9d8;box-shadow:inset 1px 1px #fff"></div>
<div style="left:208px;top:489.1px;width:1227px;height:24.9px;background:#e8e8e4"></div>
<div style="left:208px;top:490.1px;width:48px;height:22.9px;background:#c4c4c4"></div>
<div style="left:257.5px;top:490.1px;width:116px;height:22.9px;background:#00ffff"></div>
<div style="left:375.5px;top:490.1px;width:86px;height:22.9px;background:#00ffff"></div>
<div style="left:463.5px;top:490.1px;width:85px;height:22.9px;background:#00ffff"></div>
<div style="left:550.5px;top:490.1px;width:85px;height:22.9px;background:#00ffff"></div>
<div style="left:637.5px;top:490.1px;width:85px;height:22.9px;background:#00ffff"></div>
<div style="left:724.5px;top:490.1px;width:204px;height:22.9px;background:#00ffff"></div>
<div style="left:930.5px;top:490.1px;width:139px;height:22.9px;background:#00ffff"></div>
<div style="left:1071.5px;top:490.1px;width:76px;height:22.9px;background:#00ffff"></div>
<div style="left:1149.5px;top:490.1px;width:47px;height:22.9px;background:#00ffff"></div>
<div style="left:1198.5px;top:490.1px;width:42px;height:22.9px;background:#00ffff"></div>
<div style="left:1242.5px;top:490.1px;width:52px;height:22.9px;background:#00ffff"></div>
<div style="left:1296.5px;top:490.1px;width:40px;height:22.9px;background:#00ffff"></div>
<div style="left:1338.5px;top:490.1px;width:46px;height:22.9px;background:#00ffff"></div>
<div style="left:1386.5px;top:490.1px;width:48px;height:22.9px;background:#00ffff"></div>
<div style="left:227.2px;top:493.0px;font-family:'Liberation Sans', sans-serif;font-size:17.1px;font-weight:bold;color:#000;-webkit-text-stroke:0.2px #000;">8</div>
<div style="left:261.5px;top:493.0px;font-family:'Liberation Sans', sans-serif;font-size:17.1px;font-weight:bold;color:#000;letter-spacing:1.35px;transform:scaleX(1.080);transform-origin:0 0;-webkit-text-stroke:0.2px #000;">CM3</div>
<div style="left:382.3px;top:493.0px;font-family:'Liberation Sans', sans-serif;font-size:17.1px;font-weight:bold;color:#000;letter-spacing:1.04px;transform:scaleX(1.080);transform-origin:0 0;-webkit-text-stroke:0.2px #000;">025.000</div>
<div style="left:468.5px;top:493.0px;font-family:'Liberation Sans', sans-serif;font-size:17.1px;font-weight:bold;color:#000;letter-spacing:1.04px;transform:scaleX(1.080);transform-origin:0 0;-webkit-text-stroke:0.2px #000;">817.500</div>
<div style="left:578.2px;top:493.0px;font-family:'Liberation Sans', sans-serif;font-size:17.1px;font-weight:bold;color:#000;letter-spacing:1.23px;transform:scaleX(1.080);transform-origin:0 0;-webkit-text-stroke:0.2px #000;">0.000</div>
<div style="left:665.2px;top:493.0px;font-family:'Liberation Sans', sans-serif;font-size:17.1px;font-weight:bold;color:#000;letter-spacing:1.23px;transform:scaleX(1.080);transform-origin:0 0;-webkit-text-stroke:0.2px #000;">0.000</div>
<div style="left:934.5px;top:493.0px;font-family:'Liberation Sans', sans-serif;font-size:17.1px;font-weight:bold;color:#000;-webkit-text-stroke:0.2px #000;">A</div>
<div style="left:1405.5px;top:493.0px;font-family:'Liberation Sans', sans-serif;font-size:17.1px;font-weight:bold;color:#000;-webkit-text-stroke:0.2px #000;">N</div>
<div style="left:178.5px;top:514.6px;width:28.5px;height:22.4px;background:#ece9d8;box-shadow:inset 1px 1px #fff"></div>
<div style="left:208px;top:513.6px;width:1227px;height:24.9px;background:#e8e8e4"></div>
<div style="left:208px;top:514.6px;width:48px;height:22.9px;background:#c4c4c4"></div>
<div style="left:257.5px;top:514.6px;width:116px;height:22.9px;background:#ffffff"></div>
<div style="left:375.5px;top:514.6px;width:86px;height:22.9px;background:#ffffff"></div>
<div style="left:463.5px;top:514.6px;width:85px;height:22.9px;background:#ffffff"></div>
<div style="left:550.5px;top:514.6px;width:85px;height:22.9px;background:#ffffff"></div>
<div style="left:637.5px;top:514.6px;width:85px;height:22.9px;background:#ffffff"></div>
<div style="left:724.5px;top:514.6px;width:204px;height:22.9px;background:#ffffff"></div>
<div style="left:930.5px;top:514.6px;width:139px;height:22.9px;background:#ffffff"></div>
<div style="left:1071.5px;top:514.6px;width:76px;height:22.9px;background:#ffffff"></div>
<div style="left:1149.5px;top:514.6px;width:47px;height:22.9px;background:#ffffff"></div>
<div style="left:1198.5px;top:514.6px;width:42px;height:22.9px;background:#ffffff"></div>
<div style="left:1242.5px;top:514.6px;width:52px;height:22.9px;background:#ffffff"></div>
<div style="left:1296.5px;top:514.6px;width:40px;height:22.9px;background:#ffffff"></div>
<div style="left:1338.5px;top:514.6px;width:46px;height:22.9px;background:#ffffff"></div>
<div style="left:1386.5px;top:514.6px;width:48px;height:22.9px;background:#ffffff"></div>
<div style="left:227.2px;top:517.5px;font-family:'Liberation Sans', sans-serif;font-size:17.1px;font-weight:bold;color:#000;-webkit-text-stroke:0.2px #000;">9</div>
<div style="left:261.5px;top:517.5px;font-family:'Liberation Sans', sans-serif;font-size:17.1px;font-weight:bold;color:#000;letter-spacing:1.35px;transform:scaleX(1.080);transform-origin:0 0;-webkit-text-stroke:0.2px #000;">CM5</div>
<div style="left:382.3px;top:517.5px;font-family:'Liberation Sans', sans-serif;font-size:17.1px;font-weight:bold;color:#000;letter-spacing:1.04px;transform:scaleX(1.080);transform-origin:0 0;-webkit-text-stroke:0.2px #000;">215.000</div>
<div style="left:468.5px;top:517.5px;font-family:'Liberation Sans', sans-serif;font-size:17.1px;font-weight:bold;color:#000;letter-spacing:1.04px;transform:scaleX(1.080);transform-origin:0 0;-webkit-text-stroke:0.2px #000;">980.000</div>
<div style="left:578.2px;top:517.5px;font-family:'Liberation Sans', sans-serif;font-size:17.1px;font-weight:bold;color:#000;letter-spacing:1.23px;transform:scaleX(1.080);transform-origin:0 0;-webkit-text-stroke:0.2px #000;">0.000</div>
<div style="left:643.2px;top:517.5px;font-family:'Liberation Sans', sans-serif;font-size:17.1px;font-weight:bold;color:#000;letter-spacing:1.04px;transform:scaleX(1.080);transform-origin:0 0;-webkit-text-stroke:0.2px #000;">180.000</div>
<div style="left:934.5px;top:517.5px;font-family:'Liberation Sans', sans-serif;font-size:17.1px;font-weight:bold;color:#000;-webkit-text-stroke:0.2px #000;">A</div>
<div style="left:1405.5px;top:517.5px;font-family:'Liberation Sans', sans-serif;font-size:17.1px;font-weight:bold;color:#000;-webkit-text-stroke:0.2px #000;">N</div>
<div style="left:178.5px;top:539.0px;width:28.5px;height:22.4px;background:#ece9d8;box-shadow:inset 1px 1px #fff"></div>
<div style="left:208px;top:538.0px;width:1227px;height:24.9px;background:#e8e8e4"></div>
<div style="left:208px;top:539.0px;width:48px;height:22.9px;background:#c4c4c4"></div>
<div style="left:257.5px;top:539.0px;width:116px;height:22.9px;background:#00ffff"></div>
<div style="left:375.5px;top:539.0px;width:86px;height:22.9px;background:#00ffff"></div>
<div style="left:463.5px;top:539.0px;width:85px;height:22.9px;background:#00ffff"></div>
<div style="left:550.5px;top:539.0px;width:85px;height:22.9px;background:#00ffff"></div>
<div style="left:637.5px;top:539.0px;width:85px;height:22.9px;background:#00ffff"></div>
<div style="left:724.5px;top:539.0px;width:204px;height:22.9px;background:#00ffff"></div>
<div style="left:930.5px;top:539.0px;width:139px;height:22.9px;background:#00ffff"></div>
<div style="left:1071.5px;top:539.0px;width:76px;height:22.9px;background:#00ffff"></div>
<div style="left:1149.5px;top:539.0px;width:47px;height:22.9px;background:#00ffff"></div>
<div style="left:1198.5px;top:539.0px;width:42px;height:22.9px;background:#00ffff"></div>
<div style="left:1242.5px;top:539.0px;width:52px;height:22.9px;background:#00ffff"></div>
<div style="left:1296.5px;top:539.0px;width:40px;height:22.9px;background:#00ffff"></div>
<div style="left:1338.5px;top:539.0px;width:46px;height:22.9px;background:#00ffff"></div>
<div style="left:1386.5px;top:539.0px;width:48px;height:22.9px;background:#00ffff"></div>
<div style="left:222.5px;top:541.9px;font-family:'Liberation Sans', sans-serif;font-size:17.1px;font-weight:bold;color:#000;-webkit-text-stroke:0.2px #000;">10</div>
<div style="left:261.5px;top:541.9px;font-family:'Liberation Sans', sans-serif;font-size:17.1px;font-weight:bold;color:#000;letter-spacing:1.35px;transform:scaleX(1.080);transform-origin:0 0;-webkit-text-stroke:0.2px #000;">CM6</div>
<div style="left:382.3px;top:541.9px;font-family:'Liberation Sans', sans-serif;font-size:17.1px;font-weight:bold;color:#000;letter-spacing:1.04px;transform:scaleX(1.080);transform-origin:0 0;-webkit-text-stroke:0.2px #000;">512.500</div>
<div style="left:468.5px;top:541.9px;font-family:'Liberation Sans', sans-serif;font-size:17.1px;font-weight:bold;color:#000;letter-spacing:1.04px;transform:scaleX(1.080);transform-origin:0 0;-webkit-text-stroke:0.2px #000;">467.500</div>
<div style="left:578.2px;top:541.9px;font-family:'Liberation Sans', sans-serif;font-size:17.1px;font-weight:bold;color:#000;letter-spacing:1.23px;transform:scaleX(1.080);transform-origin:0 0;-webkit-text-stroke:0.2px #000;">0.000</div>
<div style="left:665.2px;top:541.9px;font-family:'Liberation Sans', sans-serif;font-size:17.1px;font-weight:bold;color:#000;letter-spacing:1.23px;transform:scaleX(1.080);transform-origin:0 0;-webkit-text-stroke:0.2px #000;">0.000</div>
<div style="left:934.5px;top:541.9px;font-family:'Liberation Sans', sans-serif;font-size:17.1px;font-weight:bold;color:#000;-webkit-text-stroke:0.2px #000;">A</div>
<div style="left:1405.5px;top:541.9px;font-family:'Liberation Sans', sans-serif;font-size:17.1px;font-weight:bold;color:#000;-webkit-text-stroke:0.2px #000;">N</div>
<div style="left:178.5px;top:563.5px;width:28.5px;height:22.4px;background:#ece9d8;box-shadow:inset 1px 1px #fff"></div>
<div style="left:208px;top:562.5px;width:1227px;height:24.9px;background:#e8e8e4"></div>
<div style="left:208px;top:563.5px;width:48px;height:22.9px;background:#c4c4c4"></div>
<div style="left:257.5px;top:563.5px;width:116px;height:22.9px;background:#ffffff"></div>
<div style="left:375.5px;top:563.5px;width:86px;height:22.9px;background:#ffffff"></div>
<div style="left:463.5px;top:563.5px;width:85px;height:22.9px;background:#ffffff"></div>
<div style="left:550.5px;top:563.5px;width:85px;height:22.9px;background:#ffffff"></div>
<div style="left:637.5px;top:563.5px;width:85px;height:22.9px;background:#ffffff"></div>
<div style="left:724.5px;top:563.5px;width:204px;height:22.9px;background:#ffffff"></div>
<div style="left:930.5px;top:563.5px;width:139px;height:22.9px;background:#ffffff"></div>
<div style="left:1071.5px;top:563.5px;width:76px;height:22.9px;background:#ffffff"></div>
<div style="left:1149.5px;top:563.5px;width:47px;height:22.9px;background:#ffffff"></div>
<div style="left:1198.5px;top:563.5px;width:42px;height:22.9px;background:#ffffff"></div>
<div style="left:1242.5px;top:563.5px;width:52px;height:22.9px;background:#ffffff"></div>
<div style="left:1296.5px;top:563.5px;width:40px;height:22.9px;background:#ffffff"></div>
<div style="left:1338.5px;top:563.5px;width:46px;height:22.9px;background:#ffffff"></div>
<div style="left:1386.5px;top:563.5px;width:48px;height:22.9px;background:#ffffff"></div>
<div style="left:223.0px;top:566.4px;font-family:'Liberation Sans', sans-serif;font-size:17.1px;font-weight:bold;color:#000;-webkit-text-stroke:0.2px #000;">11</div>
<div style="left:261.5px;top:566.4px;font-family:'Liberation Sans', sans-serif;font-size:17.1px;font-weight:bold;color:#000;letter-spacing:1.35px;transform:scaleX(1.080);transform-origin:0 0;-webkit-text-stroke:0.2px #000;">CM7</div>
<div style="left:382.3px;top:566.4px;font-family:'Liberation Sans', sans-serif;font-size:17.1px;font-weight:bold;color:#000;letter-spacing:1.04px;transform:scaleX(1.080);transform-origin:0 0;-webkit-text-stroke:0.2px #000;">190.000</div>
<div style="left:468.5px;top:566.4px;font-family:'Liberation Sans', sans-serif;font-size:17.1px;font-weight:bold;color:#000;letter-spacing:1.04px;transform:scaleX(1.080);transform-origin:0 0;-webkit-text-stroke:0.2px #000;">200.000</div>
<div style="left:578.2px;top:566.4px;font-family:'Liberation Sans', sans-serif;font-size:17.1px;font-weight:bold;color:#000;letter-spacing:1.23px;transform:scaleX(1.080);transform-origin:0 0;-webkit-text-stroke:0.2px #000;">0.000</div>
<div style="left:665.2px;top:566.4px;font-family:'Liberation Sans', sans-serif;font-size:17.1px;font-weight:bold;color:#000;letter-spacing:1.23px;transform:scaleX(1.080);transform-origin:0 0;-webkit-text-stroke:0.2px #000;">0.000</div>
<div style="left:934.5px;top:566.4px;font-family:'Liberation Sans', sans-serif;font-size:17.1px;font-weight:bold;color:#000;-webkit-text-stroke:0.2px #000;">A</div>
<div style="left:1405.5px;top:566.4px;font-family:'Liberation Sans', sans-serif;font-size:17.1px;font-weight:bold;color:#000;-webkit-text-stroke:0.2px #000;">N</div>
<div style="left:178.5px;top:588.0px;width:28.5px;height:22.4px;background:#ece9d8;box-shadow:inset 1px 1px #fff"></div>
<div style="left:208px;top:587.0px;width:1227px;height:24.9px;background:#e8e8e4"></div>
<div style="left:208px;top:588.0px;width:48px;height:22.9px;background:#c4c4c4"></div>
<div style="left:257.5px;top:588.0px;width:116px;height:22.9px;background:#00ffff"></div>
<div style="left:375.5px;top:588.0px;width:86px;height:22.9px;background:#00ffff"></div>
<div style="left:463.5px;top:588.0px;width:85px;height:22.9px;background:#00ffff"></div>
<div style="left:550.5px;top:588.0px;width:85px;height:22.9px;background:#00ffff"></div>
<div style="left:637.5px;top:588.0px;width:85px;height:22.9px;background:#00ffff"></div>
<div style="left:724.5px;top:588.0px;width:204px;height:22.9px;background:#00ffff"></div>
<div style="left:930.5px;top:588.0px;width:139px;height:22.9px;background:#00ffff"></div>
<div style="left:1071.5px;top:588.0px;width:76px;height:22.9px;background:#00ffff"></div>
<div style="left:1149.5px;top:588.0px;width:47px;height:22.9px;background:#00ffff"></div>
<div style="left:1198.5px;top:588.0px;width:42px;height:22.9px;background:#00ffff"></div>
<div style="left:1242.5px;top:588.0px;width:52px;height:22.9px;background:#00ffff"></div>
<div style="left:1296.5px;top:588.0px;width:40px;height:22.9px;background:#00ffff"></div>
<div style="left:1338.5px;top:588.0px;width:46px;height:22.9px;background:#00ffff"></div>
<div style="left:1386.5px;top:588.0px;width:48px;height:22.9px;background:#00ffff"></div>
<div style="left:222.5px;top:590.8px;font-family:'Liberation Sans', sans-serif;font-size:17.1px;font-weight:bold;color:#000;-webkit-text-stroke:0.2px #000;">12</div>
<div style="left:261.5px;top:590.8px;font-family:'Liberation Sans', sans-serif;font-size:17.1px;font-weight:bold;color:#000;letter-spacing:1.35px;transform:scaleX(1.080);transform-origin:0 0;-webkit-text-stroke:0.2px #000;">CM8</div>
<div style="left:382.3px;top:590.8px;font-family:'Liberation Sans', sans-serif;font-size:17.1px;font-weight:bold;color:#000;letter-spacing:1.04px;transform:scaleX(1.080);transform-origin:0 0;-webkit-text-stroke:0.2px #000;">440.000</div>
<div style="left:468.5px;top:590.8px;font-family:'Liberation Sans', sans-serif;font-size:17.1px;font-weight:bold;color:#000;letter-spacing:1.04px;transform:scaleX(1.080);transform-origin:0 0;-webkit-text-stroke:0.2px #000;">737.500</div>
<div style="left:578.2px;top:590.8px;font-family:'Liberation Sans', sans-serif;font-size:17.1px;font-weight:bold;color:#000;letter-spacing:1.23px;transform:scaleX(1.080);transform-origin:0 0;-webkit-text-stroke:0.2px #000;">0.000</div>
<div style="left:654.2px;top:590.8px;font-family:'Liberation Sans', sans-serif;font-size:17.1px;font-weight:bold;color:#000;letter-spacing:1.11px;transform:scaleX(1.080);transform-origin:0 0;-webkit-text-stroke:0.2px #000;">90.000</div>
<div style="left:934.5px;top:590.8px;font-family:'Liberation Sans', sans-serif;font-size:17.1px;font-weight:bold;color:#000;-webkit-text-stroke:0.2px #000;">A</div>
<div style="left:1405.5px;top:590.8px;font-family:'Liberation Sans', sans-serif;font-size:17.1px;font-weight:bold;color:#000;-webkit-text-stroke:0.2px #000;">N</div>
<div style="left:178.5px;top:612.4px;width:28.5px;height:22.4px;background:#ece9d8;box-shadow:inset 1px 1px #fff"></div>
<div style="left:208px;top:611.4px;width:1227px;height:24.9px;background:#e8e8e4"></div>
<div style="left:208px;top:612.4px;width:48px;height:22.9px;background:#c4c4c4"></div>
<div style="left:257.5px;top:612.4px;width:116px;height:22.9px;background:#ffffff"></div>
<div style="left:375.5px;top:612.4px;width:86px;height:22.9px;background:#ffffff"></div>
<div style="left:463.5px;top:612.4px;width:85px;height:22.9px;background:#ffffff"></div>
<div style="left:550.5px;top:612.4px;width:85px;height:22.9px;background:#ffffff"></div>
<div style="left:637.5px;top:612.4px;width:85px;height:22.9px;background:#ffffff"></div>
<div style="left:724.5px;top:612.4px;width:204px;height:22.9px;background:#ffffff"></div>
<div style="left:930.5px;top:612.4px;width:139px;height:22.9px;background:#ffffff"></div>
<div style="left:1071.5px;top:612.4px;width:76px;height:22.9px;background:#ffffff"></div>
<div style="left:1149.5px;top:612.4px;width:47px;height:22.9px;background:#ffffff"></div>
<div style="left:1198.5px;top:612.4px;width:42px;height:22.9px;background:#ffffff"></div>
<div style="left:1242.5px;top:612.4px;width:52px;height:22.9px;background:#ffffff"></div>
<div style="left:1296.5px;top:612.4px;width:40px;height:22.9px;background:#ffffff"></div>
<div style="left:1338.5px;top:612.4px;width:46px;height:22.9px;background:#ffffff"></div>
<div style="left:1386.5px;top:612.4px;width:48px;height:22.9px;background:#ffffff"></div>
<div style="left:222.5px;top:615.3px;font-family:'Liberation Sans', sans-serif;font-size:17.1px;font-weight:bold;color:#000;-webkit-text-stroke:0.2px #000;">13</div>
<div style="left:261.5px;top:615.3px;font-family:'Liberation Sans', sans-serif;font-size:17.1px;font-weight:bold;color:#000;letter-spacing:1.35px;transform:scaleX(1.080);transform-origin:0 0;-webkit-text-stroke:0.2px #000;">CM9</div>
<div style="left:382.3px;top:615.3px;font-family:'Liberation Sans', sans-serif;font-size:17.1px;font-weight:bold;color:#000;letter-spacing:1.04px;transform:scaleX(1.080);transform-origin:0 0;-webkit-text-stroke:0.2px #000;">952.500</div>
<div style="left:468.5px;top:615.3px;font-family:'Liberation Sans', sans-serif;font-size:17.1px;font-weight:bold;color:#000;letter-spacing:1.04px;transform:scaleX(1.080);transform-origin:0 0;-webkit-text-stroke:0.2px #000;">925.000</div>
<div style="left:578.2px;top:615.3px;font-family:'Liberation Sans', sans-serif;font-size:17.1px;font-weight:bold;color:#000;letter-spacing:1.23px;transform:scaleX(1.080);transform-origin:0 0;-webkit-text-stroke:0.2px #000;">0.000</div>
<div style="left:643.2px;top:615.3px;font-family:'Liberation Sans', sans-serif;font-size:17.1px;font-weight:bold;color:#000;letter-spacing:1.04px;transform:scaleX(1.080);transform-origin:0 0;-webkit-text-stroke:0.2px #000;">180.000</div>
<div style="left:934.5px;top:615.3px;font-family:'Liberation Sans', sans-serif;font-size:17.1px;font-weight:bold;color:#000;-webkit-text-stroke:0.2px #000;">A</div>
<div style="left:1405.5px;top:615.3px;font-family:'Liberation Sans', sans-serif;font-size:17.1px;font-weight:bold;color:#000;-webkit-text-stroke:0.2px #000;">N</div>
<div style="left:178.5px;top:636.8px;width:28.5px;height:22.4px;background:#ece9d8;box-shadow:inset 1px 1px #fff"></div>
<div style="left:208px;top:635.8px;width:1227px;height:24.9px;background:#e8e8e4"></div>
<div style="left:208px;top:636.8px;width:48px;height:22.9px;background:#c4c4c4"></div>
<div style="left:257.5px;top:636.8px;width:116px;height:22.9px;background:#00ffff"></div>
<div style="left:375.5px;top:636.8px;width:86px;height:22.9px;background:#00ffff"></div>
<div style="left:463.5px;top:636.8px;width:85px;height:22.9px;background:#00ffff"></div>
<div style="left:550.5px;top:636.8px;width:85px;height:22.9px;background:#00ffff"></div>
<div style="left:637.5px;top:636.8px;width:85px;height:22.9px;background:#00ffff"></div>
<div style="left:724.5px;top:636.8px;width:204px;height:22.9px;background:#00ffff"></div>
<div style="left:930.5px;top:636.8px;width:139px;height:22.9px;background:#00ffff"></div>
<div style="left:1071.5px;top:636.8px;width:76px;height:22.9px;background:#00ffff"></div>
<div style="left:1149.5px;top:636.8px;width:47px;height:22.9px;background:#00ffff"></div>
<div style="left:1198.5px;top:636.8px;width:42px;height:22.9px;background:#00ffff"></div>
<div style="left:1242.5px;top:636.8px;width:52px;height:22.9px;background:#00ffff"></div>
<div style="left:1296.5px;top:636.8px;width:40px;height:22.9px;background:#00ffff"></div>
<div style="left:1338.5px;top:636.8px;width:46px;height:22.9px;background:#00ffff"></div>
<div style="left:1386.5px;top:636.8px;width:48px;height:22.9px;background:#00ffff"></div>
<div style="left:222.5px;top:639.7px;font-family:'Liberation Sans', sans-serif;font-size:17.1px;font-weight:bold;color:#000;-webkit-text-stroke:0.2px #000;">14</div>
<div style="left:261.5px;top:639.7px;font-family:'Liberation Sans', sans-serif;font-size:17.1px;font-weight:bold;color:#000;letter-spacing:0.85px;transform:scaleX(1.080);transform-origin:0 0;-webkit-text-stroke:0.2px #000;">CM10</div>
<div style="left:382.3px;top:639.7px;font-family:'Liberation Sans', sans-serif;font-size:17.1px;font-weight:bold;color:#000;letter-spacing:1.04px;transform:scaleX(1.080);transform-origin:0 0;-webkit-text-stroke:0.2px #000;">820.000</div>
<div style="left:468.5px;top:639.7px;font-family:'Liberation Sans', sans-serif;font-size:17.1px;font-weight:bold;color:#000;letter-spacing:1.04px;transform:scaleX(1.080);transform-origin:0 0;-webkit-text-stroke:0.2px #000;">475.000</div>
<div style="left:578.2px;top:639.7px;font-family:'Liberation Sans', sans-serif;font-size:17.1px;font-weight:bold;color:#000;letter-spacing:1.23px;transform:scaleX(1.080);transform-origin:0 0;-webkit-text-stroke:0.2px #000;">0.000</div>
<div style="left:643.2px;top:639.7px;font-family:'Liberation Sans', sans-serif;font-size:17.1px;font-weight:bold;color:#000;letter-spacing:1.04px;transform:scaleX(1.080);transform-origin:0 0;-webkit-text-stroke:0.2px #000;">270.000</div>
<div style="left:934.5px;top:639.7px;font-family:'Liberation Sans', sans-serif;font-size:17.1px;font-weight:bold;color:#000;-webkit-text-stroke:0.2px #000;">A</div>
<div style="left:1405.5px;top:639.7px;font-family:'Liberation Sans', sans-serif;font-size:17.1px;font-weight:bold;color:#000;-webkit-text-stroke:0.2px #000;">N</div>
<svg style="position:absolute;left:189px;top:325px" width="12" height="13"><path d="M1 0.5L10 6L1 11.5z" fill="#000"/></svg>
<div style="left:1435px;top:291px;width:24px;height:369.3px;background:#f4f2ea"></div>
<div style="left:1435px;top:291px;width:24px;height:1.5px;background:#201c18"></div>
<div style="left:1458px;top:291px;width:1.5px;height:370.3px;background:#9a978a"></div>
<div style="left:1435px;top:292px;width:24px;height:21px;background:#ece9d8;box-shadow:inset 1px 1px #fff, inset -1px -1px #716f64, inset -2px -2px #aca899;"></div>
<svg style="position:absolute;left:1441px;top:298px" width="12" height="8"><path d="M1 7L6 1L11 7z" fill="#000"/></svg>
<div style="left:1435px;top:313px;width:24px;height:22px;background:#ece9d8;box-shadow:inset 1px 1px #fff, inset -1px -1px #716f64, inset -2px -2px #aca899;"></div>
<div style="left:1435px;top:640.8px;width:24px;height:20.5px;background:#ece9d8;box-shadow:inset 1px 1px #fff, inset -1px -1px #716f64, inset -2px -2px #aca899;"></div>
<svg style="position:absolute;left:1441px;top:648px" width="12" height="8"><path d="M1 1L6 7L11 1z" fill="#000"/></svg>
<div style="left:973.5px;top:319.5px;width:432px;height:357px;background:linear-gradient(90deg,#0848d8 0px,#0a36b8 3px,#0a36b8 calc(100% - 3px),#0a2ea8 100%);border-radius:8px 8px 0 0"></div>
<div style="left:973.5px;top:319.5px;width:432px;height:37.5px;background:linear-gradient(#2a78f0 0px,#5aa0ff 2px,#1a6af0 4px,#0050e0 8px,#0050e4 22px,#0a60f4 30px,#0a66f8 33px,#0040d0 36px,#0040d0 100%);border-radius:8px 8px 0 0"></div>
<div style="left:978px;top:357px;width:422.5px;height:315.5px;background:#ece9d8"></div>
<div style="left:983.8px;top:331.3px;font-family:'Liberation Serif', serif;font-size:17.5px;font-weight:bold;color:#f4f6ff;letter-spacing:0.00px;transform:scaleX(1.058);transform-origin:0 0;text-shadow:1px 1px #0a2080">Unregistered Part List</div>
<div style="left:1371px;top:327px;width:27.5px;height:26px;background:linear-gradient(135deg,#f0906c,#e05a34 55%,#d04820);border:1px solid #fff;border-radius:3px"></div>
<svg style="position:absolute;left:1374px;top:330px" width="22" height="20"><path d="M5 4L17 16M17 4L5 16" stroke="#fff" stroke-width="2.5"/></svg>
<div style="left:992px;top:370.5px;width:391px;height:55px;box-shadow:inset 1px 1px #aca899, inset -1px -1px #fff"></div>
<div style="left:994.0px;top:374.8px;font-family:'Liberation Sans', sans-serif;font-size:16.62px;font-weight:bold;color:#000;letter-spacing:0.75px;transform:scaleX(1.080);transform-origin:0 0;-webkit-text-stroke:0.2px #000;">Following parts are used in Step without</div>
<div style="left:994.0px;top:395.0px;font-family:'Liberation Sans', sans-serif;font-size:16.62px;font-weight:bold;color:#000;letter-spacing:0.84px;transform:scaleX(1.080);transform-origin:0 0;-webkit-text-stroke:0.2px #000;">being registered.</div>
<div style="left:992.5px;top:437.5px;width:391px;height:173.5px;background:#fff;box-shadow:inset 1px 1px #aca899, inset 2px 2px #716f64, inset -1px -1px #fff;"></div>
<div style="left:995px;top:439px;width:386px;height:21.5px;border:1px dotted #000"></div>
<div style="left:1117px;top:627.5px;width:145px;height:35px;background:#ece9d8;box-shadow:inset 1px 1px #fff, inset -1px -1px #716f64, inset -2px -2px #aca899;"></div>
<div style="left:1175.8px;top:636.6px;font-family:'Liberation Sans', sans-serif;font-size:16.62px;font-weight:bold;color:#000;letter-spacing:0.00px;transform:scaleX(1.075);transform-origin:0 0;-webkit-text-stroke:0.2px #000;">OK</div>
<div style="left:177px;top:674.4px;width:1281px;height:27.6px;background:#008000"></div>
<div style="left:179.4px;top:678.1px;font-family:'Liberation Sans', sans-serif;font-size:20px;font-weight:bold;color:#e8ffe8;transform:scaleX(1.133);transform-origin:0 0;-webkit-text-stroke:0.3px #e8ffe8;">Step Edit : Cut - ctrl+X,  Copy - ctrl+C,  Paste - ctrl+V,  Insert - ctrl+Z</div>
<div style="left:957.4px;top:678.1px;font-family:'Liberation Sans', sans-serif;font-size:20px;font-weight:bold;color:#e8ffe8;transform:scaleX(1.144);transform-origin:0 0;-webkit-text-stroke:0.3px #e8ffe8;">( ): Skipped Array</div>
<div style="left:177px;top:722.5px;width:277px;height:101px;border:1px solid #d0d0bf;border-radius:2px"></div>
<div style="left:195.4px;top:735.2px;font-family:'Liberation Sans', sans-serif;font-size:16.62px;font-weight:bold;color:#000;letter-spacing:0.99px;transform:scaleX(1.080);transform-origin:0 0;-webkit-text-stroke:0.2px #000;">Device</div>
<div style="left:293.3px;top:733.2px;width:141.4px;height:28px;background:#fff;box-shadow:inset 1px 1px #aca899, inset 2px 2px #716f64, inset -1px -1px #fff;"></div>
<div style="left:411px;top:735.5px;width:22px;height:24px;background:#ece9d8;box-shadow:inset 1px 1px #fff, inset -1px -1px #716f64, inset -2px -2px #aca899;"></div>
<svg style="position:absolute;left:416px;top:744px" width="12" height="7"><path d="M1 1L6 6L11 1z" fill="#000"/></svg>
<div style="left:299.3px;top:739.5px;font-family:'Liberation Sans', sans-serif;font-size:16.62px;font-weight:bold;color:#000;letter-spacing:1.17px;transform:scaleX(1.080);transform-origin:0 0;-webkit-text-stroke:0.2px #000;">Move Cam</div>
<div style="left:194.3px;top:774px;width:116px;height:40px;background:#ece9d8;box-shadow:inset 1px 1px #fff, inset -1px -1px #716f64, inset -2px -2px #aca899;"></div>
<div style="left:226.4px;top:784.9px;font-family:'Liberation Sans', sans-serif;font-size:16.62px;font-weight:bold;color:#000;letter-spacing:1.58px;transform:scaleX(1.080);transform-origin:0 0;-webkit-text-stroke:0.2px #000;">Move</div>
<div style="left:226.5px;top:801px;width:17px;height:1.2px;background:#000"></div>
<div style="left:321.8px;top:774px;width:116px;height:40px;background:#ece9d8;box-shadow:inset 1px 1px #fff, inset -1px -1px #716f64, inset -2px -2px #aca899;"></div>
<div style="left:364.7px;top:784.9px;font-family:'Liberation Sans', sans-serif;font-size:16.62px;font-weight:bold;color:#000;letter-spacing:0.73px;transform:scaleX(1.080);transform-origin:0 0;-webkit-text-stroke:0.2px #000;">Get</div>
<div style="left:364.7px;top:801px;width:13px;height:1.2px;background:#000"></div>
<div style="left:177.1px;top:842.8px;font-family:'Liberation Sans', sans-serif;font-size:16.62px;font-weight:bold;color:#000;letter-spacing:0.63px;transform:scaleX(1.080);transform-origin:0 0;-webkit-text-stroke:0.2px #000;">Array No.</div>
<div style="left:177px;top:867px;width:84px;height:11px;box-shadow:inset 1px 1px #c8c4b4, inset -1px 0 #c8c4b4"></div>
<div style="left:238px;top:868px;width:1px;height:10px;background:#d8d4c4"></div>
<div style="left:281px;top:872.5px;width:19.5px;height:6px;border:2px solid #222;border-bottom:none"></div>
<div style="left:310.0px;top:873.4px;font-family:'Liberation Sans', sans-serif;font-size:16.62px;font-weight:bold;color:#c4c1b4;letter-spacing:0.53px;transform:scaleX(1.080);transform-origin:0 0;-webkit-text-stroke:0.2px #c4c1b4;">Array Extend</div>
<div style="left:488.4px;top:723px;width:168.5px;height:160px;border:1px solid #d0d0bf;border-bottom:none"></div>
<div style="left:496px;top:712px;width:60px;height:18px;background:#ece9d8"></div>
<div style="left:501.0px;top:715.4px;font-family:'Liberation Sans', sans-serif;font-size:16.62px;font-weight:bold;color:#000;letter-spacing:1.28px;transform:scaleX(1.080);transform-origin:0 0;-webkit-text-stroke:0.2px #000;">Move</div>
<div style="left:525px;top:761.5px;width:35px;height:30px;background:#c0c0c0;box-shadow:inset 1px 1px #e8e8e8, inset -1px -1px #606060, inset -2px -2px #909090"></div>
<svg style="position:absolute;left:534px;top:768.5px" width="16" height="16"><path d="M14 1L2 8L14 15z" fill="#000"/></svg>
<div style="left:580.6px;top:761.5px;width:35px;height:30px;background:#c0c0c0;box-shadow:inset 1px 1px #e8e8e8, inset -1px -1px #606060, inset -2px -2px #909090"></div>
<svg style="position:absolute;left:590.6px;top:768.5px" width="16" height="16"><path d="M2 1L14 8L2 15z" fill="#000"/></svg>
<div style="left:547.4px;top:822.3px;font-family:'Liberation Sans', sans-serif;font-size:16.62px;font-weight:bold;color:#000;letter-spacing:0.00px;transform:scaleX(1.015);transform-origin:0 0;-webkit-text-stroke:0.2px #000;">Auto</div>
<div style="left:596.2px;top:821.5px;width:19px;height:16px;border:2px solid #111;background:#fff"></div>
<div style="left:529.6px;top:855.7px;font-family:'Liberation Sans', sans-serif;font-size:16.62px;font-weight:bold;color:#aeab9e;letter-spacing:0.30px;transform:scaleX(1.080);transform-origin:0 0;-webkit-text-stroke:0.2px #aeab9e;">Adjust</div>
<div style="left:596.2px;top:855.4px;width:19px;height:16px;border:2px solid #111;background:#fff"></div>
<div style="left:677.2px;top:723px;width:177px;height:160px;border:1px solid #d0d0bf;border-bottom:none"></div>
<div style="left:685px;top:712px;width:50px;height:18px;background:#ece9d8"></div>
<div style="left:690.3px;top:715.4px;font-family:'Liberation Sans', sans-serif;font-size:16.62px;font-weight:bold;color:#000;letter-spacing:0.16px;transform:scaleX(1.080);transform-origin:0 0;-webkit-text-stroke:0.2px #000;">Find</div>
<div style="left:694.2px;top:761.4px;width:142.4px;height:28.6px;background:#fff;box-shadow:inset 1px 1px #aca899, inset 2px 2px #716f64, inset -1px -1px #fff;"></div>
<div style="left:693.7px;top:804.8px;font-family:'Liberation Sans', sans-serif;font-size:16.62px;font-weight:bold;color:#000;letter-spacing:0.33px;transform:scaleX(1.080);transform-origin:0 0;-webkit-text-stroke:0.2px #000;">Array</div>
<div style="left:753px;top:798px;width:83px;height:27.4px;background:#fff;box-shadow:inset 1px 1px #aca899, inset 2px 2px #716f64, inset -1px -1px #fff;"></div>
<div style="left:811px;top:800px;width:23px;height:23.4px;background:#ece9d8;box-shadow:inset 1px 1px #fff, inset -1px -1px #716f64, inset -2px -2px #aca899;"></div>
<svg style="position:absolute;left:816px;top:808px" width="12" height="7"><path d="M1 1L6 6L11 1z" fill="#000"/></svg>
<div style="left:759.0px;top:804.8px;font-family:'Liberation Sans', sans-serif;font-size:16.62px;font-weight:bold;color:#000;-webkit-text-stroke:0.2px #000;">1</div>
<div style="left:719.8px;top:843.7px;width:35px;height:30px;background:#c0c0c0;box-shadow:inset 1px 1px #e8e8e8, inset -1px -1px #606060, inset -2px -2px #909090"></div>
<svg style="position:absolute;left:728.8px;top:850.7px" width="16" height="16"><path d="M14 1L2 8L14 15z" fill="#000"/></svg>
<div style="left:774.7px;top:843.7px;width:35px;height:30px;background:#c0c0c0;box-shadow:inset 1px 1px #e8e8e8, inset -1px -1px #606060, inset -2px -2px #909090"></div>
<svg style="position:absolute;left:784.7px;top:850.7px" width="16" height="16"><path d="M2 1L14 8L2 15z" fill="#000"/></svg>
<div style="left:917px;top:722.2px;width:145px;height:41px;background:#ece9d8;box-shadow:inset 1px 1px #fff, inset -1px -1px #716f64, inset -2px -2px #aca899;"></div>
<div style="left:932.0px;top:735.4px;font-family:'Liberation Sans', sans-serif;font-size:16.62px;font-weight:bold;color:#000;letter-spacing:0.87px;transform:scaleX(1.080);transform-origin:0 0;-webkit-text-stroke:0.2px #000;">2Pt. Teach...</div>
<div style="left:917px;top:768.7px;width:145px;height:41px;background:#ece9d8;box-shadow:inset 1px 1px #fff, inset -1px -1px #716f64, inset -2px -2px #aca899;"></div>
<div style="left:943.9px;top:781.9px;font-family:'Liberation Sans', sans-serif;font-size:16.62px;font-weight:bold;color:#000;letter-spacing:0.62px;transform:scaleX(1.080);transform-origin:0 0;-webkit-text-stroke:0.2px #000;">Fiducial...</div>
<div style="left:917px;top:815.3px;width:145px;height:41px;background:#ece9d8;box-shadow:inset 1px 1px #fff, inset -1px -1px #716f64, inset -2px -2px #aca899;"></div>
<div style="left:954.3px;top:828.5px;font-family:'Liberation Sans', sans-serif;font-size:16.62px;font-weight:bold;color:#000;letter-spacing:0.45px;transform:scaleX(1.080);transform-origin:0 0;-webkit-text-stroke:0.2px #000;">Offset...</div>
<div style="left:1099.7px;top:722.2px;width:145px;height:41px;background:#ece9d8;box-shadow:inset 1px 1px #fff, inset -1px -1px #716f64, inset -2px -2px #aca899;"></div>
<div style="left:1116.5px;top:735.4px;font-family:'Liberation Sans', sans-serif;font-size:16.62px;font-weight:bold;color:#000;letter-spacing:0.80px;transform:scaleX(1.080);transform-origin:0 0;-webkit-text-stroke:0.2px #000;">Insert 1Line</div>
<div style="left:1099.7px;top:768.7px;width:145px;height:41px;background:#ece9d8;box-shadow:inset 1px 1px #fff, inset -1px -1px #716f64, inset -2px -2px #aca899;"></div>
<div style="left:1142.3px;top:781.9px;font-family:'Liberation Sans', sans-serif;font-size:16.62px;font-weight:bold;color:#000;letter-spacing:0.97px;transform:scaleX(1.080);transform-origin:0 0;-webkit-text-stroke:0.2px #000;">Delete</div>
<div style="left:1099.7px;top:815.3px;width:145px;height:41px;background:#ece9d8;box-shadow:inset 1px 1px #fff, inset -1px -1px #716f64, inset -2px -2px #aca899;"></div>
<div style="left:1119.4px;top:828.5px;font-family:'Liberation Sans', sans-serif;font-size:16.62px;font-weight:bold;color:#000;letter-spacing:0.73px;transform:scaleX(1.080);transform-origin:0 0;-webkit-text-stroke:0.2px #000;">Clear Cycle</div>
<div style="left:1314px;top:722.2px;width:145px;height:41px;background:#ece9d8;box-shadow:inset 1px 1px #fff, inset -1px -1px #716f64, inset -2px -2px #aca899;"></div>
<div style="left:1348.2px;top:735.4px;font-family:'Liberation Sans', sans-serif;font-size:16.62px;font-weight:bold;color:#000;letter-spacing:0.57px;transform:scaleX(1.080);transform-origin:0 0;-webkit-text-stroke:0.2px #000;">Import...</div>
<div style="left:1314px;top:768.7px;width:145px;height:41px;background:#ece9d8;box-shadow:inset 1px 1px #fff, inset -1px -1px #716f64, inset -2px -2px #aca899;"></div>
<div style="left:1348.2px;top:781.9px;font-family:'Liberation Sans', sans-serif;font-size:16.62px;font-weight:bold;color:#000;letter-spacing:0.63px;transform:scaleX(1.080);transform-origin:0 0;-webkit-text-stroke:0.2px #000;">Export...</div>
<div style="left:1187px;top:751px;width:11.5px;height:1.5px;background:#000"></div>
<div style="left:1157px;top:797px;width:11px;height:1.5px;background:#000"></div>
<div style="left:917px;top:861px;width:145px;height:30px;background:#ece9d8;box-shadow:inset 1px 1px #fff, inset -1px -1px #716f64, inset -2px -2px #aca899;"></div>
<div style="left:954.0px;top:872.9px;font-family:'Liberation Sans', sans-serif;font-size:16.62px;font-weight:bold;color:#aeab9e;-webkit-text-stroke:0.2px #aeab9e;">Adjust...</div>
<div style="left:151px;top:878px;width:1332px;height:3px;background:#6a74cc"></div>
<div style="left:151px;top:881px;width:1332px;height:2px;background:#e4e4f0"></div>
<div style="left:150px;top:883px;width:1336px;height:8px;background:#ece9d8"></div>
<div style="left:150px;top:891px;width:1321px;height:87px;background:#fff;box-shadow:inset 2px 2px #8a877a, inset -1px -1px #f8f8f4"></div>
<div style="left:0px;top:979px;width:1486px;height:5px;background:#ece9d8"></div>
<div style="left:0px;top:983px;width:1486px;height:1px;background:#aca899"></div>
<div style="left:0px;top:984px;width:1486px;height:27px;background:#ece9d8"></div>
<div style="left:0px;top:988px;width:469px;height:21px;box-shadow:inset 1px 1px #c8c4b4, inset -1px -1px #fff"></div>
<div style="left:2.7px;top:988.1px;font-family:'Liberation Serif', serif;font-size:17px;font-weight:bold;color:#000;letter-spacing:0.06px;transform:scaleX(1.080);transform-origin:0 0;-webkit-text-stroke:0.35px #000;">For Help, press F1</div>
<div style="left:472.3px;top:988px;width:38.69999999999999px;height:21px;box-shadow:inset 1px 1px #c8c4b4, inset -1px -1px #fff"></div>
<div style="left:514.0px;top:988px;width:74.0px;height:21px;box-shadow:inset 1px 1px #c8c4b4, inset -1px -1px #fff"></div>
<div style="left:475.4px;top:987.6px;font-family:'Liberation Serif', serif;font-size:17px;font-weight:bold;color:#000;letter-spacing:0.00px;transform:scaleX(1.012);transform-origin:0 0;-webkit-text-stroke:0.35px #000;">H1</div>
<div style="left:517.0px;top:987.6px;font-family:'Liberation Serif', serif;font-size:17px;font-weight:bold;color:#000;letter-spacing:0.00px;transform:scaleX(1.075);transform-origin:0 0;-webkit-text-stroke:0.35px #000;">Empty</div>
<div style="left:592.7px;top:988px;width:38.69999999999993px;height:21px;box-shadow:inset 1px 1px #c8c4b4, inset -1px -1px #fff"></div>
<div style="left:634.4px;top:988px;width:74.0px;height:21px;box-shadow:inset 1px 1px #c8c4b4, inset -1px -1px #fff"></div>
<div style="left:595.8px;top:987.6px;font-family:'Liberation Serif', serif;font-size:17px;font-weight:bold;color:#000;letter-spacing:0.00px;transform:scaleX(1.012);transform-origin:0 0;-webkit-text-stroke:0.35px #000;">H2</div>
<div style="left:637.4px;top:987.6px;font-family:'Liberation Serif', serif;font-size:17px;font-weight:bold;color:#000;letter-spacing:0.00px;transform:scaleX(1.075);transform-origin:0 0;-webkit-text-stroke:0.35px #000;">Empty</div>
<div style="left:713.1px;top:988px;width:38.69999999999993px;height:21px;box-shadow:inset 1px 1px #c8c4b4, inset -1px -1px #fff"></div>
<div style="left:754.8px;top:988px;width:74.0px;height:21px;box-shadow:inset 1px 1px #c8c4b4, inset -1px -1px #fff"></div>
<div style="left:716.2px;top:987.6px;font-family:'Liberation Serif', serif;font-size:17px;font-weight:bold;color:#000;letter-spacing:0.00px;transform:scaleX(1.012);transform-origin:0 0;-webkit-text-stroke:0.35px #000;">H3</div>
<div style="left:757.8px;top:987.6px;font-family:'Liberation Serif', serif;font-size:17px;font-weight:bold;color:#000;letter-spacing:0.00px;transform:scaleX(1.075);transform-origin:0 0;-webkit-text-stroke:0.35px #000;">Empty</div>
<div style="left:833.5px;top:988px;width:38.700000000000045px;height:21px;box-shadow:inset 1px 1px #c8c4b4, inset -1px -1px #fff"></div>
<div style="left:875.2px;top:988px;width:74.0px;height:21px;box-shadow:inset 1px 1px #c8c4b4, inset -1px -1px #fff"></div>
<div style="left:836.6px;top:987.6px;font-family:'Liberation Serif', serif;font-size:17px;font-weight:bold;color:#000;letter-spacing:0.00px;transform:scaleX(1.012);transform-origin:0 0;-webkit-text-stroke:0.35px #000;">H4</div>
<div style="left:878.2px;top:987.6px;font-family:'Liberation Serif', serif;font-size:17px;font-weight:bold;color:#000;letter-spacing:0.00px;transform:scaleX(1.075);transform-origin:0 0;-webkit-text-stroke:0.35px #000;">Empty</div>
<div style="left:953.9000000000001px;top:988px;width:38.69999999999993px;height:21px;box-shadow:inset 1px 1px #c8c4b4, inset -1px -1px #fff"></div>
<div style="left:995.6px;top:988px;width:73.99999999999989px;height:21px;box-shadow:inset 1px 1px #c8c4b4, inset -1px -1px #fff"></div>
<div style="left:957.0px;top:987.6px;font-family:'Liberation Serif', serif;font-size:17px;font-weight:bold;color:#000;letter-spacing:0.00px;transform:scaleX(1.012);transform-origin:0 0;-webkit-text-stroke:0.35px #000;">H5</div>
<div style="left:998.6px;top:987.6px;font-family:'Liberation Serif', serif;font-size:17px;font-weight:bold;color:#000;letter-spacing:0.00px;transform:scaleX(1.075);transform-origin:0 0;-webkit-text-stroke:0.35px #000;">Empty</div>
<div style="left:1074.3px;top:988px;width:38.700000000000045px;height:21px;box-shadow:inset 1px 1px #c8c4b4, inset -1px -1px #fff"></div>
<div style="left:1116.0px;top:988px;width:74.0px;height:21px;box-shadow:inset 1px 1px #c8c4b4, inset -1px -1px #fff"></div>
<div style="left:1077.4px;top:987.6px;font-family:'Liberation Serif', serif;font-size:17px;font-weight:bold;color:#000;letter-spacing:0.00px;transform:scaleX(1.012);transform-origin:0 0;-webkit-text-stroke:0.35px #000;">H6</div>
<div style="left:1119.0px;top:987.6px;font-family:'Liberation Serif', serif;font-size:17px;font-weight:bold;color:#000;letter-spacing:0.00px;transform:scaleX(1.075);transform-origin:0 0;-webkit-text-stroke:0.35px #000;">Empty</div>
<div style="left:1196px;top:988px;width:25px;height:21px;box-shadow:inset 1px 1px #c8c4b4, inset -1px -1px #fff"></div>
<div style="left:1198.0px;top:987.6px;font-family:'Liberation Serif', serif;font-size:17px;font-weight:bold;color:#000;-webkit-text-stroke:0.35px #000;">X</div>
<div style="left:1224px;top:988px;width:114px;height:21px;box-shadow:inset 1px 1px #c8c4b4, inset -1px -1px #fff"></div>
<div style="left:1227.0px;top:987.6px;font-family:'Liberation Serif', serif;font-size:17px;font-weight:bold;color:#000;letter-spacing:0.97px;transform:scaleX(1.080);transform-origin:0 0;-webkit-text-stroke:0.35px #000;">0.000</div>
<div style="left:1342px;top:988px;width:124px;height:21px;box-shadow:inset 1px 1px #c8c4b4, inset -1px -1px #fff"></div>
<div style="left:1344.0px;top:987.6px;font-family:'Liberation Serif', serif;font-size:17px;font-weight:bold;color:#000;-webkit-text-stroke:0.35px #000;">Y</div>
<div style="left:1354px;top:977px;width:74px;height:33px;background:linear-gradient(#2a58d0 0px,#3a80f0 3px,#2a64e0 8px,#2a62e0 28px,#2a5ad8 33px)"></div>
<svg style="position:absolute;left:1354px;top:977px" width="74" height="33" viewBox="0 0 74 33"><g fill="#1a3ab0"><circle cx="4" cy="7.5" r="1.3"/><circle cx="8" cy="10" r="1.3"/><circle cx="4" cy="13.5" r="1.3"/><circle cx="8" cy="17" r="1.3"/><circle cx="4" cy="20.5" r="1.3"/></g><path d="M22 13q2-4 4-2t4-1 4 0 4 1" stroke="#10205a" stroke-width="1.2" fill="none"/><rect x="19.5" y="14" width="22" height="11" fill="#10184a"/><rect x="21" y="15.5" width="19" height="7.5" fill="#e8e4dc"/><g fill="#303020"><rect x="22" y="16.5" width="2" height="2"/><rect x="25" y="16.5" width="2" height="2"/><rect x="28" y="16.5" width="2" height="2"/><rect x="31" y="16.5" width="2" height="2"/><rect x="34" y="16.5" width="2" height="2"/><rect x="37" y="16.5" width="2" height="2"/><rect x="22" y="19.5" width="2" height="2"/><rect x="25" y="19.5" width="2" height="2"/><rect x="28" y="19.5" width="2" height="2"/><rect x="31" y="19.5" width="2" height="2"/><rect x="34" y="19.5" width="2" height="2"/><rect x="37" y="19.5" width="2" height="2"/></g><rect x="57" y="10" width="8" height="2.5" fill="#e8f0ff"/><path d="M57 21h8l-4 4z" fill="#e8f0ff"/></svg>
<svg style="position:absolute;left:1467px;top:992px" width="18" height="18"><path d="M16 2L2 16M16 7L7 16M16 12L12 16" stroke="#aca899" stroke-width="1.5"/></svg>
<div style="left:0px;top:1010px;width:1486px;height:44px;background:linear-gradient(#1a50c8 0px,#3a7ae8 3px,#4a90f0 7px,#2a62dc 10px,#2158d8 22px,#2460e0 40px,#1a58d0 42px,#1a50c8 44px)"></div>
<div style="left:0px;top:1016px;width:131px;height:34.5px;background:radial-gradient(ellipse at 75% 70%,#4cae48 0%,#3a9a3a 35%,transparent 70%),linear-gradient(#2f7a30 0%,#6cb46a 12%,#3a963a 30%,#2f8a30 60%,#2a7a2c 90%,#1f5f22 100%);border-radius:0 13px 13px 0;box-shadow:inset -2px 0 3px #1a5a1a"></div>
<svg style="position:absolute;left:14px;top:1021px" width="30" height="25" viewBox="0 0 30 25"><path d="M6 3.5q4-2.5 9 0l-1.5 8q-4-2.5-9 0z" fill="#e8501a"/><path d="M16.5 4q4.5-2 10 0.5l-1.5 8.5q-5-2.5-10-0.5z" fill="#7acc2a"/><path d="M4 12.5q4-2.5 9 0l-1.5 8q-4-2.5-9 0z" fill="#4a86e8"/><path d="M14.5 13q5-2 10 0.5l-1.5 8.5q-5-2.5-10-0.5z" fill="#f8c818"/></svg>
<svg style="position:absolute;left:53px;top:1024px;overflow:visible" width="55" height="21"><g fill="none" stroke="#f0f8e8" stroke-width="1.4" stroke-linecap="square" transform="skewX(-12)"><path transform="translate(0.00,0) scale(1.375,1.169)" vector-effect="non-scaling-stroke" d="M1.5 1V16M1.5 1.5H7V6.5H1.5M1.5 4H7M14.5 1V16M9 1.5H14.5M9 1.5V6.5H14.5M9 4H14.5M4.5 9H11.5M3.5 12H12.5M6 9V16M10 9V16"/><path transform="translate(24.40,0) scale(1.375,1.169)" vector-effect="non-scaling-stroke" d="M4 1L2 8.5L7.5 14M6.5 4.5L3 16M0.5 7H8M12 1L9.5 7H15.5M13.5 4.5L15.5 6.5M9.5 9.5H15V15H9.5Z"/></g></svg>
<div style="left:144px;top:1018px;width:3px;height:32px;background:repeating-linear-gradient(#1a3a98 0 2px,transparent 2px 5px)"></div>
<div style="left:149px;top:1020px;width:3px;height:32px;background:repeating-linear-gradient(#1a3a98 0 2px,transparent 2px 5px)"></div>
<div style="left:161px;top:1020.7px;width:229px;height:29px;background:linear-gradient(#4a8ef0,#3a7ce8 50%,#3070e0);border-radius:3px;box-shadow:inset 1px 1px #6aa8f8"></div>
<svg style="position:absolute;left:174px;top:1024px" width="22" height="22"><rect x="1" y="1" width="20" height="20" fill="#f0f0e8" stroke="#2a7a3a" stroke-width="2"/><path d="M5 5l12 12M17 5L5 17" stroke="#1a8a3a" stroke-width="3"/></svg>
<div style="left:202.3px;top:1026.1px;font-family:'Liberation Serif', serif;font-size:16.5px;font-weight:normal;color:#fff;letter-spacing:0.00px;transform:scaleX(1.011);transform-origin:0 0;">Microsoft Excel -</div>
<svg style="position:absolute;left:324px;top:1028px;overflow:visible" width="22" height="16"><g fill="none" stroke="#fff" stroke-width="1.1" stroke-linecap="square"><path transform="translate(0.00,0) scale(0.906,0.906)" vector-effect="non-scaling-stroke" d="M8 0.3V2M1 5V2.5H15V5M3 5.5H12.5V8.5H3M3 5.5V12.5H14L13 16M4.5 14.5V15.5M7 14V15.5M9.5 14V15.5M3 9.5H13"/></g></svg>
<div style="left:340.0px;top:1026.1px;font-family:'Liberation Serif', serif;font-size:16.5px;font-weight:normal;color:#fff;letter-spacing:0.16px;transform:scaleX(1.080);transform-origin:0 0;">...</div>
<div style="left:393.5px;top:1020.7px;width:230px;height:29px;background:linear-gradient(#1e50c0,#1a48b8 50%,#1c4cbc);border-radius:3px;box-shadow:inset 1px 1px #0e3090"></div>
<svg style="position:absolute;left:406px;top:1021px" width="28" height="28" viewBox="0 0 32 32"><rect x="13" y="8.5" width="10" height="3" fill="#183860"/><rect x="21.5" y="6" width="2.5" height="6" fill="#102040"/><rect x="14" y="9.5" width="2" height="1.5" fill="#8ab0d0"/><rect x="18" y="9.5" width="2" height="1.5" fill="#8ab0d0"/><rect x="2.6" y="11" width="23.4" height="15.5" fill="#10143a"/><rect x="4" y="12" width="20.5" height="3.8" fill="#801028"/><rect x="4" y="15.8" width="20.5" height="2.6" fill="#d8a8b0"/><rect x="4" y="18.4" width="20.5" height="1" fill="#506050"/><rect x="6.5" y="19.4" width="14" height="5" fill="#d8d8e0"/><rect x="4" y="12" width="2.5" height="13" fill="#e8e8f0"/><rect x="21" y="12" width="2.5" height="13" fill="#e8e8f0"/><rect x="7" y="25.3" width="13.5" height="1.5" fill="#1a48b8"/></svg>
<div style="left:437.4px;top:1026.8px;font-family:'Liberation Serif', serif;font-size:16.5px;font-weight:normal;color:#fff;">[</div>
<svg style="position:absolute;left:442px;top:1028px;overflow:visible" width="94" height="16"><g fill="none" stroke="#fff" stroke-width="1.1" stroke-linecap="square"><path transform="translate(0.00,0) scale(0.906,0.906)" vector-effect="non-scaling-stroke" d="M3 4.5H13M1 8.5H15M8 1V16M8 8.5L1.5 15M8 8.5L14.5 15"/><path transform="translate(17.60,0) scale(0.906,0.906)" vector-effect="non-scaling-stroke" d="M8 1L1 7M8 1L15 7M5 7H11M2 9.5V15M2 9.5H6.5V13.5H2M9.5 9.5H14V14M11.5 9.5V16"/><path transform="translate(35.20,0) scale(0.906,0.906)" vector-effect="non-scaling-stroke" d="M7 1L2.5 6M5 3.5H11.5L3 10.5M6 9H13.5V15.5H6Z"/><path transform="translate(52.80,0) scale(0.906,0.906)" vector-effect="non-scaling-stroke" d="M0.5 5H6.5M3.5 1V16M3.5 6L0.5 12M3.5 6L6.5 10M8 2H15.5M8.5 4.5H15V7.5H8.5ZM10.5 4.5V7.5M13 4.5V7.5M8 9.5H15.5M9 12H14.5M11.8 12V16M10 13.5L8 15.5M13.5 13.5L15.5 15.5"/><path transform="translate(70.40,0) scale(0.906,0.906)" vector-effect="non-scaling-stroke" d="M1 1.5H7V7H1ZM1 4.2H7M0.5 9H7.5M4 9V14M4 11.5H7M2 10.5L0.8 14.5M1.5 13.5Q4 16 8 16M9 1.5H15.5M9.8 3.5H14.8V12H9.8ZM9.8 6.3H14.8M9.8 9.2H14.8M11 12L9 15M13.5 12L15.5 15"/></g></svg>
<div style="left:529.8px;top:1026.8px;font-family:'Liberation Serif', serif;font-size:16.5px;font-weight:normal;color:#fff;">]</div>
<div style="left:539.8px;top:1026.1px;font-family:'Liberation Serif', serif;font-size:16.5px;font-weight:normal;color:#fff;">-</div>
<div style="left:549.9px;top:1026.1px;font-family:'Liberation Serif', serif;font-size:16.5px;font-weight:normal;color:#fff;letter-spacing:0.00px;transform:scaleX(1.007);transform-origin:0 0;">CP So...</div>
<div style="left:1226.5px;top:1016.7px;width:259px;height:36.3px;background:linear-gradient(#18a0f0,#1490e8 50%,#1488e0);box-shadow:inset 1px 0 #0a60c0"></div>
<svg style="position:absolute;left:1238px;top:1022px" width="245" height="26" viewBox="0 0 245 26"><rect x="4" y="2" width="23" height="21" fill="#ffff00"/><text x="9.5" y="20" font-family="Liberation Sans" font-weight="bold" font-size="19" fill="#e00000">?</text><circle cx="36" cy="13" r="5" fill="#a8dca8"/><circle cx="44" cy="7" r="4.5" fill="#2f9a5a"/><circle cx="40" cy="16" r="3" fill="#60b0e0"/><circle cx="47" cy="18" r="5.5" fill="#e03030"/><path d="M45 16l4 4M49 16l-4 4" stroke="#fff" stroke-width="1.4"/><rect x="57" y="10" width="11" height="9" fill="#4a5aa0" stroke="#2a2a60"/><rect x="64" y="4" width="12" height="9" fill="#7080c8" stroke="#2a2a60"/><rect x="57" y="20" width="10" height="2" fill="#c0c8e0"/><circle cx="93" cy="12" r="8.5" fill="#a8a8b4" stroke="#505060" stroke-width="2"/><circle cx="93" cy="12" r="3" fill="#404050"/><path d="M98 20l6-4" stroke="#c0d0f0" stroke-width="2"/><path d="M110 14l8-4 10 5-8 5z" fill="#9a9a90" stroke="#404040" stroke-width="0.8"/><path d="M113 2l6 3-2 2 4 3-5 1-3-3-2 2z" fill="#38b038"/><path d="M136 2q0 12 10 16l6 2" stroke="#f4f4f4" stroke-width="3" fill="none"/><path d="M136 2q0 12 10 16" stroke="#606060" stroke-width="0.8" fill="none"/><rect x="149" y="16" width="9" height="7" fill="#e0d040" stroke="#505020" stroke-width="0.8"/><rect x="161" y="2" width="23" height="22" fill="#fff" stroke="#303060" stroke-width="1.2"/><rect x="163" y="4" width="19" height="9" fill="#1020d0"/><path d="M166 13l5 5 6-7" stroke="#e02020" stroke-width="2.5" fill="none"/><rect x="189" y="3" width="19" height="12" fill="#f0e070" stroke="#c0a030" stroke-width="0.6"/><rect x="189" y="17" width="9" height="5" fill="#e07060"/><rect x="200" y="17" width="8" height="5" fill="#a0a8c0"/><circle cx="223" cy="12" r="9" fill="#2a4aa0" stroke="#102060" stroke-width="2"/><circle cx="223" cy="12" r="4.5" fill="#b0c8f0"/><path d="M230 16l6 5" stroke="#8090b0" stroke-width="2"/></svg>
</body></html>
